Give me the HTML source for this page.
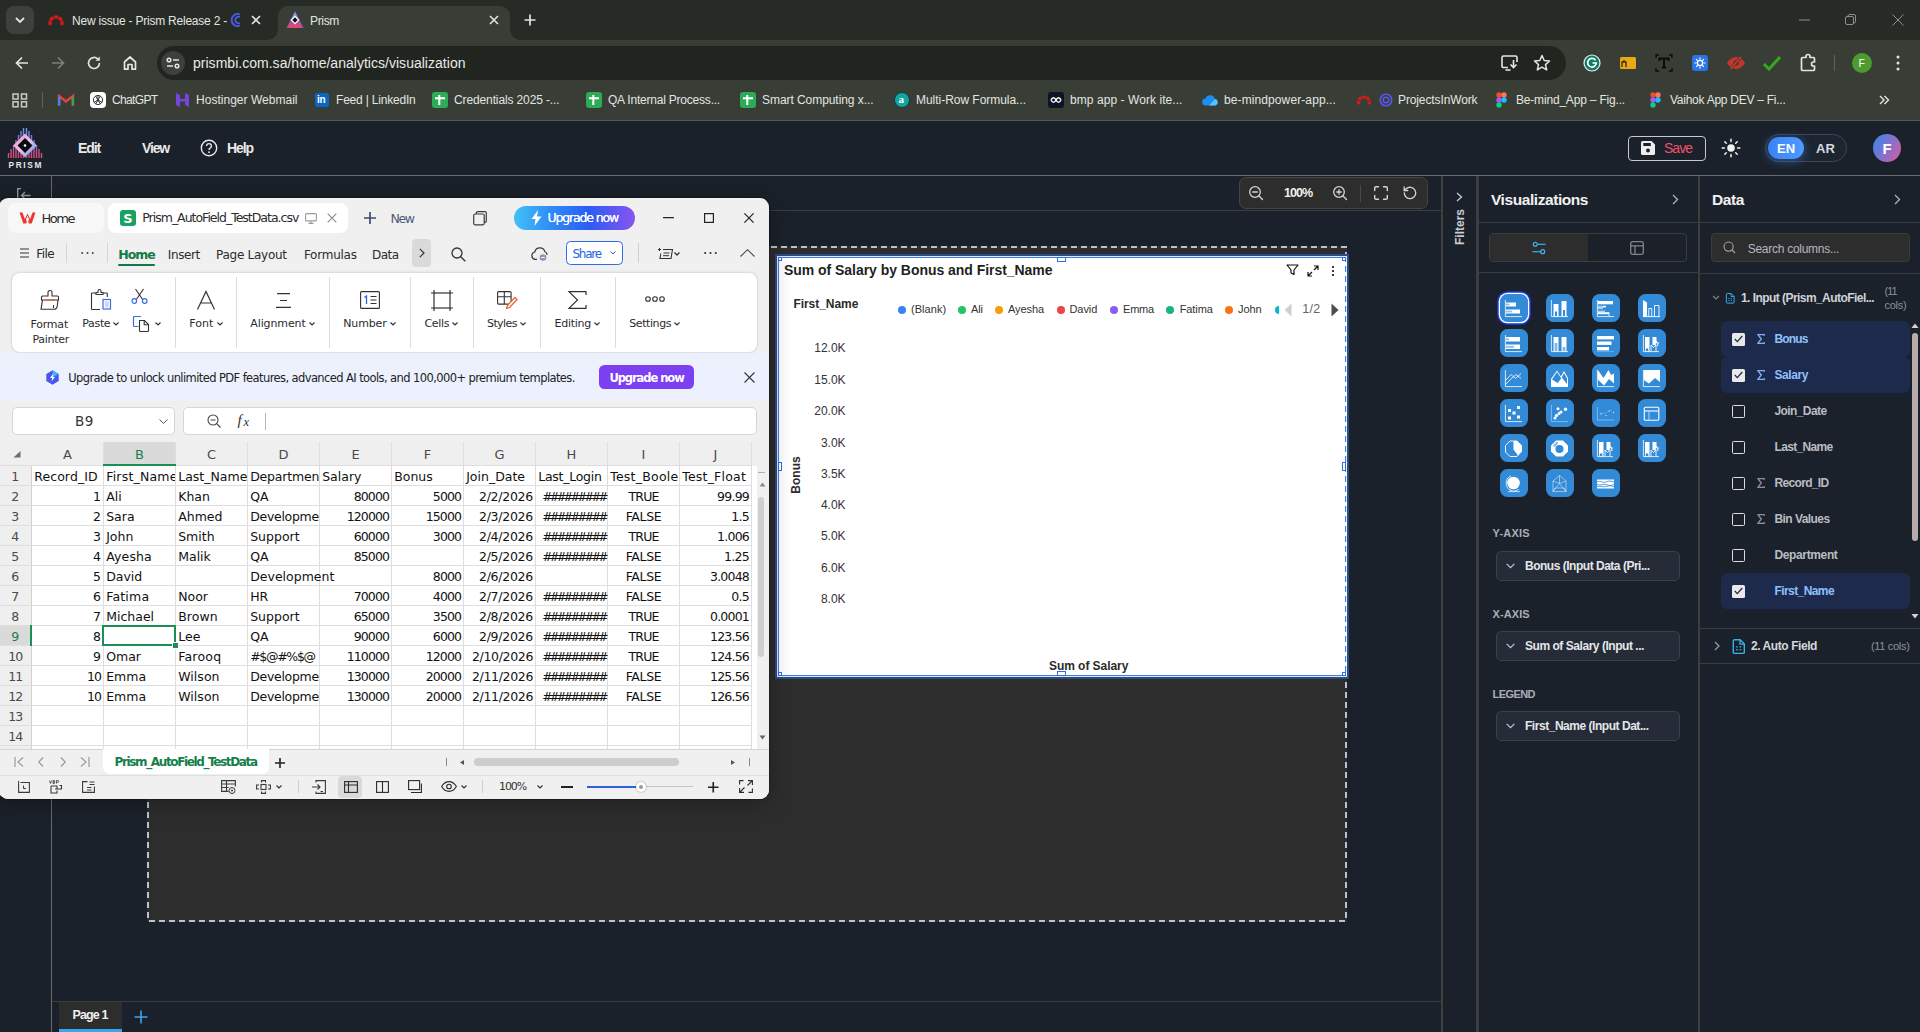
<!DOCTYPE html>
<html lang="en"><head><meta charset="utf-8"><title>Prism</title>
<style>
*{box-sizing:border-box;margin:0;padding:0}
html,body{width:1920px;height:1032px;overflow:hidden}
body{position:relative;background:#1b212a;font-family:"Liberation Sans",sans-serif;color:#e6e6e6;font-size:13px}
.abs{position:absolute}
svg{display:block;position:absolute;overflow:visible}
.t{position:absolute;white-space:nowrap;line-height:1}
/* chrome */
#tabstrip{left:0;top:0;width:1920px;height:40px;background:#272b25}
#toolbar{left:0;top:40px;width:1920px;height:46px;background:#383d36}
#bmbar{left:0;top:86px;width:1920px;height:35px;background:#383d36}
#urlbar{left:157px;top:46px;width:1409px;height:34px;border-radius:17px;background:#21251f}
.ctxt{color:#e3e5e2;font-size:13px}
.bm{color:#e3e5e2;font-size:13px;top:93px}
/* app */
#apphdr{left:0;top:121px;width:1920px;height:55px;background:#1b212a;border-bottom:1px solid #4a4d50}
.menu{color:#e8e8e8;font-weight:bold;font-size:14px;top:141px}
.vline{background:#45474a;width:1px}
.hline{background:#45474a;height:1px}
</style></head><body>

<div class="abs" id="tabstrip"></div>
<div class="abs" id="toolbar"></div>
<div class="abs" id="bmbar"></div>
<div class="abs" style="left:6px;top:6px;width:28px;height:28px;border-radius:8px;background:#3d403d"></div>
<svg style="left:14px;top:16px" width="12" height="8" viewBox="0 0 12 8"><path d="M2 2l4 4 4-4" fill="none" stroke="#e3e5e2" stroke-width="1.8"/></svg>
<svg style="left:47px;top:12px" width="18" height="16" viewBox="0 0 18 16"><path d="M3.360 13.050A6 6 0 1 1 14.640 13.050" fill="none" stroke="#d41a1a" stroke-width="3.400" stroke-dasharray="4 .75"/></svg>
<div class="t" style="left:72.00px;top:15px;font-size:12px;letter-spacing:-0.220px;color:#e3e5e2;">New issue - Prism Release 2 -</div>
<svg style="left:231px;top:13px" width="12" height="14" viewBox="0 0 12 14"><path d="M9 1.5A6 6 0 1 0 9 12.5M9 4A3.3 3.3 0 1 0 9 10" fill="none" stroke="#4a5cf0" stroke-width="1.8"/></svg>
<svg style="left:251px;top:15px" width="10" height="10" viewBox="0 0 10 10"><path d="M1 1l8 8M9 1l-8 8" stroke="#e3e5e2" stroke-width="1.6"/></svg>
<div class="abs" style="left:278px;top:6px;width:232px;height:34px;border-radius:10px 10px 0 0;background:#383d36"></div>
<div class="abs" style="left:268px;top:30px;width:10px;height:10px;background:radial-gradient(circle at 0 0,#272b25 9.5px,#383d36 10px)"></div>
<div class="abs" style="left:510px;top:30px;width:10px;height:10px;background:radial-gradient(circle at 100% 0,#272b25 9.5px,#383d36 10px)"></div>
<svg style="left:286px;top:11px" width="18" height="18" viewBox="0 0 18 18"><path d="M9 0L17.5 17H.5z" fill="#8e5aa8"/><path d="M9 1L13 9H5z" fill="#6fa3e8"/><path d="M2 17h14l-2-5H4z" fill="#d94a78"/><path d="M9 4.5l4.5 4.5L9 13.5 4.500 9z" fill="#fff"/><path d="M9 6.300L11.700 9 9 11.700 6.300 9z" fill="#111"/></svg>
<div class="t" style="left:310.00px;top:15px;font-size:12px;letter-spacing:-0.332px;color:#e3e5e2;">Prism</div>
<svg style="left:489px;top:15px" width="10" height="10" viewBox="0 0 10 10"><path d="M1 1l8 8M9 1l-8 8" stroke="#e3e5e2" stroke-width="1.6"/></svg>
<svg style="left:524px;top:14px" width="12" height="12" viewBox="0 0 12 12"><path d="M6 0.500v11M0.500 6h11" stroke="#e3e5e2" stroke-width="1.7"/></svg>
<svg style="left:1799px;top:19px" width="12" height="2" viewBox="0 0 12 2"><path d="M0 1h11" stroke="#8d908c" stroke-width="1"/></svg>
<svg style="left:1845px;top:14px" width="12" height="12" viewBox="0 0 12 12"><rect x=".5" y="2.500" width="8" height="8" rx="1.500" fill="none" stroke="#8d908c"/><path d="M3 2.500V2a1.500 1.500 0 0 1 1.500-1.500H9A1.500 1.500 0 0 1 10.500 2v5.500a1.500 1.500 0 0 1-1.500 1.500" fill="none" stroke="#8d908c"/></svg>
<svg style="left:1892px;top:14px" width="12" height="12" viewBox="0 0 12 12"><path d="M.5.5l11 11M11.500.5l-11 11" stroke="#8d908c" stroke-width="1"/></svg>
<svg style="left:14px;top:55px" width="16" height="16" viewBox="0 0 16 16"><path d="M14 8H2.500M8 2.500L2.500 8 8 13.500" fill="none" stroke="#e3e5e2" stroke-width="1.7"/></svg>
<svg style="left:50px;top:55px" width="16" height="16" viewBox="0 0 16 16"><path d="M2 8h11.500M8 2.500L13.500 8 8 13.500" fill="none" stroke="#7b7f7a" stroke-width="1.7"/></svg>
<svg style="left:86px;top:55px" width="16" height="16" viewBox="0 0 16 16"><path d="M13.500 8A5.500 5.500 0 1 1 11.800 4" fill="none" stroke="#e3e5e2" stroke-width="1.7"/><path d="M13.800 1.500v4.300H9.500z" fill="#e3e5e2"/></svg>
<svg style="left:122px;top:55px" width="16" height="16" viewBox="0 0 16 16"><path d="M2.500 7L8 2l5.500 5v7.200H10V9.500H6v4.700H2.500z" fill="none" stroke="#e3e5e2" stroke-width="1.7" stroke-linejoin="round"/></svg>
<div class="abs" id="urlbar"></div>
<div class="abs" style="left:161px;top:51px;width:24px;height:24px;border-radius:12px;background:#3d413c"></div>
<svg style="left:166px;top:57px" width="14" height="12" viewBox="0 0 14 12"><circle cx="3" cy="3" r="1.800" fill="none" stroke="#e3e5e2" stroke-width="1.500"/><path d="M7 3h6" stroke="#e3e5e2" stroke-width="1.500"/><circle cx="11" cy="9" r="1.800" fill="none" stroke="#e3e5e2" stroke-width="1.500"/><path d="M1 9h6" stroke="#e3e5e2" stroke-width="1.500"/></svg>
<div class="t" style="left:193.00px;top:56px;font-size:14px;letter-spacing:0.022px;color:#e8eae7;">prismbi.com.sa/home/analytics/visualization</div>
<svg style="left:1501px;top:55px" width="18" height="16" viewBox="0 0 18 16"><path d="M7 12.500H2.500a1.500 1.500 0 0 1-1.500-1.500V2.500A1.500 1.500 0 0 1 2.500 1h12A1.500 1.500 0 0 1 16 2.500V7" fill="none" stroke="#e3e5e2" stroke-width="1.600"/><path d="M4.500 15h5" stroke="#e3e5e2" stroke-width="1.600"/><path d="M12.500 5v7M9.500 9.500l3 3 3-3" fill="none" stroke="#e3e5e2" stroke-width="1.600"/></svg>
<svg style="left:1533px;top:54px" width="18" height="17" viewBox="0 0 18 17"><path d="M9 1.500l2.200 5 5.300.5-4 3.600 1.200 5.300L9 13.100l-4.700 2.800 1.200-5.300-4-3.600 5.300-.5z" fill="none" stroke="#e3e5e2" stroke-width="1.500" stroke-linejoin="round"/></svg>
<svg style="left:1582px;top:53px" width="20" height="20" viewBox="0 0 20 20"><circle cx="10" cy="10" r="8" fill="#0f7d66" stroke="#e9efec" stroke-width="1.200"/><path d="M13.500 7.200A4.300 4.300 0 1 0 14.300 10H10.500" fill="none" stroke="#fff" stroke-width="1.700"/></svg>
<svg style="left:1619px;top:56px" width="18" height="14" viewBox="0 0 18 14"><rect x="1" y="1" width="16" height="12" rx="1.500" fill="#e8a914"/><path d="M3 11V6h4v5M5 6V4" stroke="#3b2c00" stroke-width="1.300" fill="none"/></svg>
<svg style="left:1655px;top:54px" width="18" height="18" viewBox="0 0 18 18"><path d="M4 1H1v3M1 14v3h3M14 1h3v3M17 14v3h-3" fill="none" stroke="#0b0b0b" stroke-width="1.300"/><path d="M4.500 7V4.500h9V7M9 4.500v9M7 13.500h4" fill="none" stroke="#0b0b0b" stroke-width="2"/></svg>
<div class="abs" style="left:1692px;top:55px;width:16px;height:16px;border-radius:3px;background:#2a73e8"></div>
<svg style="left:1694px;top:57px" width="12" height="12" viewBox="0 0 12 12"><circle cx="6" cy="6" r="2.600" fill="none" stroke="#fff" stroke-width="1.400"/><path d="M6 .5v2M6 9.500v2M.5 6h2M9.500 6h2M2.100 2.100l1.400 1.400M8.500 8.500l1.400 1.400M2.100 9.900l1.400-1.400M8.500 3.500l1.400-1.400" stroke="#fff" stroke-width="1.200"/></svg>
<svg style="left:1726px;top:56px" width="20" height="14" viewBox="0 0 20 14"><path d="M1 7c3-5 7-6 9-6s6 1 9 6c-3 5-7 6-9 6s-6-1-9-6z" fill="#c8342a"/><circle cx="10" cy="7" r="2.600" fill="#383d36"/><path d="M4 13.500L15.500 .5" stroke="#383d36" stroke-width="3"/><path d="M4.500 13L15 1" stroke="#d83a2e" stroke-width="1.500"/></svg>
<svg style="left:1762px;top:54px" width="20" height="18" viewBox="0 0 20 18"><path d="M2 10l5 5L18 3" fill="none" stroke="#35a81c" stroke-width="3"/></svg>
<svg style="left:1799px;top:53px" width="19" height="19" viewBox="0 0 19 19"><path d="M7 3.500a2 2 0 0 1 4 0V4.500h3.500a1 1 0 0 1 1 1V9h-1a2 2 0 0 0 0 4h1v3.500a1 1 0 0 1-1 1H3.500a1 1 0 0 1-1-1V5.500a1 1 0 0 1 1-1H7z" fill="none" stroke="#e3e5e2" stroke-width="1.700" stroke-linejoin="round"/></svg>
<div class="abs" style="left:1834px;top:55px;width:1px;height:16px;background:#5d615c"></div>
<div class="abs" style="left:1852px;top:53px;width:20px;height:20px;border-radius:10px;background:#4f9a2c"></div>
<div class="t" style="left:1858.500px;top:58px;font-size:10.500px;color:#fff">F</div>
<svg style="left:1896px;top:55px" width="4" height="16" viewBox="0 0 4 16"><circle cx="2" cy="2" r="1.500" fill="#e3e5e2"/><circle cx="2" cy="8" r="1.500" fill="#e3e5e2"/><circle cx="2" cy="14" r="1.500" fill="#e3e5e2"/></svg>
<svg style="left:12px;top:93px" width="16" height="15" viewBox="0 0 16 15"><g fill="none" stroke="#c9ccc8" stroke-width="1.500"><rect x="1" y="1" width="5" height="5"/><rect x="9.500" y="1" width="5" height="5"/><rect x="1" y="8.800" width="5" height="5"/><rect x="9.500" y="8.800" width="5" height="5"/></g></svg>
<div class="abs" style="left:42px;top:92px;width:1px;height:16px;background:#5d615c"></div>
<svg style="left:58px;top:94px" width="16" height="12" viewBox="0 0 16 12"><path d="M1 11.500V2l7 5.500L15 2v9.500" fill="none" stroke="#ea4335" stroke-width="2.400"/><path d="M1.200 11.500V3" stroke="#4285f4" stroke-width="2.400"/><path d="M14.800 11.500V3" stroke="#34a853" stroke-width="2.400"/></svg>
<div class="abs" style="left:90px;top:92px;width:16px;height:16px;border-radius:4px;background:#fff"></div>
<svg style="left:92px;top:94px" width="12" height="12" viewBox="0 0 12 12"><g fill="none" stroke="#222" stroke-width=".9"><circle cx="6" cy="6" r="4.600"/><path d="M6 1.400v4.600l4 2.300M6 6L2 8.300M3.700 2l4.600 8M8.300 2L3.700 10"/></g></svg>
<div class="t" style="left:112.00px;top:94px;font-size:12px;letter-spacing:-0.645px;color:#e3e5e2;">ChatGPT</div>
<svg style="left:175px;top:92px" width="15" height="16" viewBox="0 0 15 16"><path d="M1 1l4 2v4h5V1l4 2v12l-4-2V9.500H5V15l-4-2z" fill="#7346e0"/><path d="M5 7h5v2.500H5z" fill="#272b25" opacity=".0"/></svg>
<div class="t" style="left:196.00px;top:94px;font-size:12px;letter-spacing:0.021px;color:#e3e5e2;">Hostinger Webmail</div>
<div class="abs" style="left:315px;top:93px;width:14px;height:14px;border-radius:2px;background:#0a66c2"></div>
<div class="t" style="left:317px;top:95px;font-size:10px;font-weight:bold;color:#fff;letter-spacing:-.3px">in</div>
<div class="t" style="left:336.00px;top:94px;font-size:12px;letter-spacing:-0.200px;color:#e3e5e2;">Feed | LinkedIn</div>
<div class="abs" style="left:432px;top:92px;width:16px;height:16px;border-radius:3px;background:#2eab58"></div>
<svg style="left:432px;top:92px" width="16" height="16" viewBox="0 0 16 16"><path d="M3 6.200h10M7.300 3v10" stroke="#fff" stroke-width="2"/></svg>
<div class="t" style="left:454.00px;top:94px;font-size:12px;letter-spacing:-0.122px;color:#e3e5e2;">Credentials 2025 -...</div>
<div class="abs" style="left:586px;top:92px;width:16px;height:16px;border-radius:3px;background:#2eab58"></div>
<svg style="left:586px;top:92px" width="16" height="16" viewBox="0 0 16 16"><path d="M3 6.200h10M7.300 3v10" stroke="#fff" stroke-width="2"/></svg>
<div class="t" style="left:608.00px;top:94px;font-size:12px;letter-spacing:-0.215px;color:#e3e5e2;">QA Internal Process...</div>
<div class="abs" style="left:740px;top:92px;width:16px;height:16px;border-radius:3px;background:#2eab58"></div>
<svg style="left:740px;top:92px" width="16" height="16" viewBox="0 0 16 16"><path d="M3 6.200h10M7.300 3v10" stroke="#fff" stroke-width="2"/></svg>
<div class="t" style="left:762.00px;top:94px;font-size:12px;letter-spacing:-0.060px;color:#e3e5e2;">Smart Computing x...</div>
<div class="abs" style="left:894px;top:92px;width:16px;height:16px;border-radius:8px;background:#12a5a0;border:1.500px solid #0d3e45"></div>
<div class="t" style="left:898.500px;top:94px;font-size:11px;font-weight:bold;color:#fff;font-family:'Liberation Serif',serif">a</div>
<div class="t" style="left:916.00px;top:94px;font-size:12px;letter-spacing:-0.034px;color:#e3e5e2;">Multi-Row Formula...</div>
<div class="abs" style="left:1048px;top:92px;width:16px;height:16px;border-radius:3px;background:#0d1424"></div>
<svg style="left:1050px;top:96px" width="12" height="8" viewBox="0 0 12 8"><path d="M1 4c1.500-3 3.500-3 5 0s3.500 3 5 0M1 4c1.500 3 3.500 3 5 0s3.500-3 5 0" fill="none" stroke="#fff" stroke-width="1.500"/></svg>
<div class="t" style="left:1070.00px;top:94px;font-size:12px;letter-spacing:0.064px;color:#e3e5e2;">bmp app - Work ite...</div>
<svg style="left:1202px;top:94px" width="17" height="12" viewBox="0 0 17 12"><path d="M4 11.500a3.500 3.500 0 0 1-.5-7A5 5 0 0 1 13 5a3.300 3.300 0 0 1 .3 6.500z" fill="#1e8df2"/><path d="M7 11.500l6-6.400a3.300 3.300 0 0 1 .3 6.400z" fill="#56c3fb"/></svg>
<div class="t" style="left:1224.00px;top:94px;font-size:12px;letter-spacing:0.102px;color:#e3e5e2;">be-mindpower-app...</div>
<svg style="left:1355px;top:93px" width="18" height="14" viewBox="0 0 18 14"><path d="M3.830 11.400A5.500 5.500 0 1 1 14.170 11.400" fill="none" stroke="#d41a1a" stroke-width="3.200" stroke-dasharray="3.700 .7"/></svg>
<svg style="left:1379px;top:93px" width="14" height="14" viewBox="0 0 14 14"><circle cx="7" cy="7" r="5.800" fill="none" stroke="#5a55f0" stroke-width="1.600"/><circle cx="7" cy="7" r="2.800" fill="none" stroke="#5a55f0" stroke-width="1.600"/></svg>
<div class="t" style="left:1398.00px;top:94px;font-size:12px;letter-spacing:-0.117px;color:#e3e5e2;">ProjectsInWork</div>
<svg style="left:1496px;top:92px" width="11" height="16" viewBox="0 0 11 16"><circle cx="3" cy="3" r="2.700" fill="#f24e1e"/><circle cx="8" cy="3" r="2.700" fill="#ff7262"/><circle cx="3" cy="8" r="2.700" fill="#a259ff"/><circle cx="8" cy="8" r="2.700" fill="#1abcfe"/><circle cx="3" cy="13" r="2.700" fill="#0acf83"/></svg>
<div class="t" style="left:1516.00px;top:94px;font-size:12px;letter-spacing:-0.186px;color:#e3e5e2;">Be-mind_App – Fig...</div>
<svg style="left:1650px;top:92px" width="11" height="16" viewBox="0 0 11 16"><circle cx="3" cy="3" r="2.700" fill="#f24e1e"/><circle cx="8" cy="3" r="2.700" fill="#ff7262"/><circle cx="3" cy="8" r="2.700" fill="#a259ff"/><circle cx="8" cy="8" r="2.700" fill="#1abcfe"/><circle cx="3" cy="13" r="2.700" fill="#0acf83"/></svg>
<div class="t" style="left:1670.00px;top:94px;font-size:12px;letter-spacing:-0.258px;color:#e3e5e2;">Vaihok App DEV – Fi...</div>
<svg style="left:1879px;top:95px" width="10" height="10" viewBox="0 0 10 10"><path d="M1 1l4 4-4 4M5.500 1l4 4-4 4" fill="none" stroke="#e3e5e2" stroke-width="1.400"/></svg>
<div class="abs" style="left:0px;top:120px;width:1920px;height:1px;background:#555853;"></div>
<div class="abs" style="left:0px;top:121px;width:1920px;height:54px;background:#1b212a;"></div>
<div class="abs" style="left:0px;top:175px;width:1920px;height:1px;background:#666a70;"></div>
<svg style="left:7px;top:127px" width="36" height="41" viewBox="0 0 36 41">
<defs><linearGradient id="lg1" x1="0" y1="0" x2="0" y2="1"><stop offset="0" stop-color="#5aa0f0"/><stop offset=".55" stop-color="#9a5fc0"/><stop offset="1" stop-color="#e8486e"/></linearGradient>
<linearGradient id="lg2" x1="0" y1="0" x2="1" y2="1"><stop offset="0" stop-color="#f08ab0"/><stop offset=".5" stop-color="#e8c8e8"/><stop offset="1" stop-color="#3f8ef0"/></linearGradient></defs>
<g stroke="url(#lg1)" stroke-width="1.400">
<path d="M1.500 31V26M4 31V22M6.500 31V18M9 31V13M11.500 31V8M14 31V4M16.500 31V1M19.500 31V1M22 31V4M24.500 31V8M27 31V13M29.500 31V18M32 31V22M34.500 31V26"/></g>
<path d="M18 6.500L30 18.500 18 30.500 6 18.500z" fill="url(#lg2)"/>
<path d="M18 11L25.500 18.500 18 26 10.500 18.500z" fill="#0a0a0f"/><circle cx="18" cy="18.500" r="1.300" fill="#fff"/>
<text x="18.800" y="40.600" font-family="Liberation Sans, sans-serif" font-size="8.300" font-weight="bold" fill="#e8e8e8" text-anchor="middle" letter-spacing="1.700">PRISM</text></svg>
<div class="t" style="left:78.00px;top:141px;font-size:14px;letter-spacing:-1.110px;color:#e9e9e9;font-weight:bold;">Edit</div>
<div class="t" style="left:142.00px;top:141px;font-size:14px;letter-spacing:-1.163px;color:#e9e9e9;font-weight:bold;">View</div>
<svg style="left:200px;top:139px" width="18" height="18" viewBox="0 0 18 18"><circle cx="9" cy="9" r="7.700" fill="none" stroke="#e9e9e9" stroke-width="1.400"/><path d="M6.600 7a2.400 2.400 0 1 1 3.600 2.100c-.8.500-1.200.9-1.200 1.900" fill="none" stroke="#e9e9e9" stroke-width="1.400"/><circle cx="9" cy="13.200" r=".9" fill="#e9e9e9"/></svg>
<div class="t" style="left:227.00px;top:141px;font-size:14px;letter-spacing:-1.085px;color:#e9e9e9;font-weight:bold;">Help</div>
<div class="abs" style="left:1628px;top:136px;width:78px;height:25px;background:transparent;border:1px solid #c9c9c9;border-radius:4px"></div>
<svg style="left:1641px;top:141px" width="14" height="14" viewBox="0 0 14 14"><path d="M1.500 0h9L14 3.500v9a1.500 1.500 0 0 1-1.500 1.500h-11A1.500 1.500 0 0 1 0 12.500v-11A1.500 1.500 0 0 1 1.500 0z" fill="#ededed"/><rect x="2.300" y="2" width="7.500" height="3" fill="#1b2029"/><circle cx="7" cy="9.500" r="2" fill="#1b2029"/></svg>
<div class="t" style="left:1664.00px;top:141px;font-size:14px;letter-spacing:-0.978px;color:#f0506e;">Save</div>
<svg style="left:1721px;top:138px" width="20" height="20" viewBox="0 0 20 20"><circle cx="10" cy="10" r="3.800" fill="#f2f2f2"/><g stroke="#f2f2f2" stroke-width="1.500" stroke-linecap="round"><path d="M10 1.200v2.200M10 16.600v2.200M1.200 10h2.200M16.600 10h2.200M3.800 3.800l1.500 1.500M14.700 14.700l1.500 1.500M3.800 16.200l1.500-1.500M14.700 5.300l1.500-1.500"/></g></svg>
<div class="abs" style="left:1765px;top:134px;width:82px;height:28px;background:#1d2530;border:1px solid #3b4656;border-radius:14px"></div>
<div class="abs" style="left:1768px;top:137px;width:36px;height:22px;background:linear-gradient(90deg,#3b82f6,#4f9bff);border-radius:11px;box-shadow:0 2px 10px 1px rgba(59,130,246,.45)"></div>
<div class="t" style="left:1777.00px;top:142px;font-size:13px;letter-spacing:-0.030px;color:#ffffff;font-weight:bold;">EN</div>
<div class="t" style="left:1816.00px;top:142px;font-size:13px;letter-spacing:0.112px;color:#d5d9e0;font-weight:bold;">AR</div>
<div class="abs" style="left:1873px;top:134px;width:28px;height:28px;background:linear-gradient(120deg,#3f86e8 10%,#8a6fc8 55%,#e05a9a 100%);border-radius:14px"></div>
<div class="t" style="left:1882.50px;top:141px;font-size:15px;color:#fff;font-weight:bold;">F</div>
<div class="abs" style="left:51px;top:176px;width:1px;height:856px;background:#676b72;"></div>
<svg style="left:17px;top:188px" width="14" height="12" viewBox="0 0 14 12"><path d="M4 .7H.7V12M13.500 7.500H4.500M8 4L4.500 7.500 8 11" fill="none" stroke="#9aa0a8" stroke-width="1.300"/></svg>
<div class="abs" style="left:53px;top:210px;width:1388px;height:1px;background:#3d3d3d;"></div>
<div class="abs" style="left:1239px;top:177px;width:189px;height:32px;background:#2d2d2d;border:1px solid #454545;border-radius:7px"></div>
<svg style="left:1248px;top:185px" width="16" height="16" viewBox="0 0 16 16"><circle cx="7" cy="7" r="5.300" fill="none" stroke="#d6d6d6" stroke-width="1.300"/><path d="M11 11l3.500 3.500M4.700 7h4.600" stroke="#d6d6d6" stroke-width="1.300" stroke-linecap="round"/></svg>
<div class="t" style="left:1284.00px;top:187px;font-size:12.5px;letter-spacing:-0.993px;color:#f0f0f0;font-weight:bold;">100%</div>
<svg style="left:1332px;top:185px" width="16" height="16" viewBox="0 0 16 16"><circle cx="7" cy="7" r="5.300" fill="none" stroke="#d6d6d6" stroke-width="1.300"/><path d="M11 11l3.500 3.500M4.700 7h4.600M7 4.700v4.600" stroke="#d6d6d6" stroke-width="1.300" stroke-linecap="round"/></svg>
<div class="abs" style="left:1360px;top:185px;width:1px;height:17px;background:#4a4a4a;"></div>
<svg style="left:1374px;top:186px" width="14" height="14" viewBox="0 0 14 14"><path d="M.7 4.500V2A1.300 1.300 0 0 1 2 .7h2.500M9.500.7H12A1.300 1.300 0 0 1 13.300 2v2.500M13.300 9.500V12a1.300 1.300 0 0 1-1.300 1.300H9.500M4.500 13.300H2A1.300 1.300 0 0 1 .7 12V9.500" fill="none" stroke="#d6d6d6" stroke-width="1.400" stroke-linecap="round"/></svg>
<svg style="left:1403px;top:186px" width="14" height="14" viewBox="0 0 14 14"><path d="M1.300 7A5.700 5.700 0 1 0 3.200 2.700L1.200 4.500" fill="none" stroke="#d6d6d6" stroke-width="1.300" stroke-linecap="round"/><path d="M1.200 1v3.500h3.500" fill="none" stroke="#d6d6d6" stroke-width="1.300" stroke-linecap="round" stroke-linejoin="round"/></svg>
<div class="abs" style="left:147px;top:246px;width:1200px;height:676px;background:#2d2d2d"></div>
<svg style="left:147px;top:246px" width="1200" height="676" viewBox="0 0 1200 676"><rect x="1" y="1" width="1198" height="674" fill="none" stroke="#bcc2cc" stroke-width="2" stroke-dasharray="6 4" stroke-dashoffset="-3"/></svg>
<div class="abs" style="left:52px;top:1001px;width:1389px;height:1px;background:#3d3d3d;"></div>
<div class="abs" style="left:59px;top:1002px;width:63px;height:30px;background:#2d2d2d;"></div>
<div class="abs" style="left:59px;top:1029px;width:63px;height:3px;background:#38a5ec;"></div>
<div class="t" style="left:72.50px;top:1009px;font-size:12.5px;letter-spacing:-0.884px;color:#f0f0f0;font-weight:bold;">Page 1</div>
<svg style="left:134px;top:1010px" width="14" height="14" viewBox="0 0 14 14"><path d="M7 .5v13M.5 7h13" stroke="#3fa2e8" stroke-width="1.600"/></svg>
<div class="abs" style="left:778px;top:257px;width:568px;height:419px;background:#fff;border:1px solid #3b7bea;box-shadow:0 0 0 1px #dfe8f7,0 0 0 3px #2b4b87"></div>
<svg style="left:1345px;top:257px" width="2" height="418" viewBox="0 0 2 418"><path d="M1 0v418" stroke="#fff" stroke-width="2" stroke-dasharray="4 6" stroke-dashoffset="-5"/></svg>
<div class="abs" style="left:1057px;top:257px;width:9px;height:5px;background:#fff;border:1px solid #2f6fe0"></div>
<div class="abs" style="left:1057px;top:671px;width:9px;height:5px;background:#fff;border:1px solid #2f6fe0"></div>
<div class="abs" style="left:778px;top:462px;width:4px;height:9px;background:#fff;border:1px solid #2f6fe0"></div>
<div class="abs" style="left:1342px;top:462px;width:4px;height:9px;background:#fff;border:1px solid #2f6fe0"></div>
<div class="abs" style="left:778px;top:257px;width:4px;height:4px;background:#fff;border:1px solid #2f6fe0"></div>
<div class="abs" style="left:1342px;top:257px;width:4px;height:4px;background:#fff;border:1px solid #2f6fe0"></div>
<div class="abs" style="left:778px;top:672px;width:4px;height:4px;background:#fff;border:1px solid #2f6fe0"></div>
<div class="abs" style="left:1342px;top:672px;width:4px;height:4px;background:#fff;border:1px solid #2f6fe0"></div>
<div class="t" style="left:784.00px;top:263px;font-size:14px;letter-spacing:-0.039px;color:#1f1f1f;font-weight:bold;">Sum of Salary by Bonus and First_Name</div>
<svg style="left:1286px;top:264px" width="13" height="12" viewBox="0 0 13 12"><path d="M1 1h11L8 6v4.500L5 9V6z" fill="none" stroke="#111" stroke-width="1.200" stroke-linejoin="round"/></svg>
<svg style="left:1307px;top:265px" width="12" height="12" viewBox="0 0 12 12"><path d="M7 1h4v4M11 1L7 5M5 11H1V7M1 11l4-4" fill="none" stroke="#111" stroke-width="1.200"/></svg>
<svg style="left:1331px;top:265px" width="4" height="12" viewBox="0 0 4 12"><circle cx="2" cy="2" r="1.100" fill="#111"/><circle cx="2" cy="6" r="1.100" fill="#111"/><circle cx="2" cy="10" r="1.100" fill="#111"/></svg>
<div class="t" style="left:793.40px;top:298px;font-size:12px;letter-spacing:-0.036px;color:#2b2b2b;font-weight:bold;">First_Name</div>
<div class="abs" style="left:898px;top:305.5px;width:8px;height:8px;border-radius:4px;background:#3b82f6"></div>
<div class="t" style="left:911.00px;top:304px;font-size:11px;letter-spacing:0.051px;color:#333;">(Blank)</div>
<div class="abs" style="left:958px;top:305.5px;width:8px;height:8px;border-radius:4px;background:#22c55e"></div>
<div class="t" style="left:971.00px;top:304px;font-size:11px;letter-spacing:-0.142px;color:#333;">Ali</div>
<div class="abs" style="left:995px;top:305.5px;width:8px;height:8px;border-radius:4px;background:#f59e0b"></div>
<div class="t" style="left:1008.00px;top:304px;font-size:11px;letter-spacing:-0.082px;color:#333;">Ayesha</div>
<div class="abs" style="left:1056.5px;top:305.5px;width:8px;height:8px;border-radius:4px;background:#ef4444"></div>
<div class="t" style="left:1069.50px;top:304px;font-size:11px;letter-spacing:-0.085px;color:#333;">David</div>
<div class="abs" style="left:1109.7px;top:305.5px;width:8px;height:8px;border-radius:4px;background:#8b5cf6"></div>
<div class="t" style="left:1123.00px;top:304px;font-size:11px;letter-spacing:-0.195px;color:#333;">Emma</div>
<div class="abs" style="left:1166.3px;top:305.5px;width:8px;height:8px;border-radius:4px;background:#10b981"></div>
<div class="t" style="left:1179.70px;top:304px;font-size:11px;letter-spacing:-0.086px;color:#333;">Fatima</div>
<div class="abs" style="left:1225px;top:305.5px;width:8px;height:8px;border-radius:4px;background:#f97316"></div>
<div class="t" style="left:1238.00px;top:304px;font-size:11px;letter-spacing:-0.038px;color:#333;">John</div>
<div class="abs" style="left:1275px;top:305.5px;width:4px;height:8px;border-radius:4px 0 0 4px;background:#06b6d4"></div>
<svg style="left:1284px;top:303px" width="8" height="14" viewBox="0 0 8 14"><path d="M7.500 .5v13L.5 7z" fill="#d0d0d0"/></svg>
<div class="t" style="left:1302.30px;top:303px;font-size:12.5px;letter-spacing:0.208px;color:#666;">1/2</div>
<svg style="left:1331px;top:303px" width="8" height="14" viewBox="0 0 8 14"><path d="M.5 .5v13L7.500 7z" fill="#4d4d4d"/></svg>
<div class="t" style="left:814.24px;top:342.3px;font-size:12px;color:#333;">12.0K</div>
<div class="t" style="left:814.24px;top:373.6px;font-size:12px;color:#333;">15.0K</div>
<div class="t" style="left:814.24px;top:404.8px;font-size:12px;color:#333;">20.0K</div>
<div class="t" style="left:820.91px;top:436.8px;font-size:12px;color:#333;">3.0K</div>
<div class="t" style="left:820.91px;top:468.0px;font-size:12px;color:#333;">3.5K</div>
<div class="t" style="left:820.91px;top:499.0px;font-size:12px;color:#333;">4.0K</div>
<div class="t" style="left:820.91px;top:530.1999999999999px;font-size:12px;color:#333;">5.0K</div>
<div class="t" style="left:820.91px;top:561.8px;font-size:12px;color:#333;">6.0K</div>
<div class="t" style="left:820.91px;top:593.0999999999999px;font-size:12px;color:#333;">8.0K</div>
<div class="t" style="left:758px;top:468.500px;width:76px;text-align:center;font-size:12px;font-weight:bold;color:#2b2b2b;transform:rotate(-90deg)">Bonus</div>
<div class="t" style="left:1049.00px;top:660px;font-size:12px;letter-spacing:-0.056px;color:#2b2b2b;font-weight:bold;">Sum of Salary</div>
<div class="abs" style="left:1441px;top:176px;width:2px;height:856px;background:#404040;"></div>
<div class="abs" style="left:1476px;top:176px;width:3px;height:856px;background:#3e3e3e;"></div>
<div class="abs" style="left:1698px;top:176px;width:2px;height:856px;background:#3d3d3d;"></div>
<svg style="left:1456px;top:192px" width="7" height="10" viewBox="0 0 7 10"><path d="M1 1l4.500 4L1 9" fill="none" stroke="#c9ccd2" stroke-width="1.300"/></svg>
<div class="t" style="left:1430px;top:221px;width:60px;text-align:center;font-size:12px;font-weight:bold;color:#c9ccd2;transform:rotate(-90deg)">Filters</div>
<div class="t" style="left:1491.00px;top:192px;font-size:15.5px;letter-spacing:-0.434px;color:#f2f2f2;font-weight:bold;">Visualizations</div>
<svg style="left:1672px;top:194px" width="7" height="11" viewBox="0 0 7 11"><path d="M1 1l4.500 4.500L1 10" fill="none" stroke="#aeb3bb" stroke-width="1.300"/></svg>
<div class="abs" style="left:1479px;top:222px;width:219px;height:1px;background:#3d3d3d;"></div>
<div class="abs" style="left:1489px;top:233px;width:198px;height:29px;background:#1b2029;border:1px solid #3a3d42;border-radius:4px;overflow:hidden"></div>
<div class="abs" style="left:1490px;top:234px;width:98px;height:27px;background:#2d2d2d;border-radius:3px 0 0 3px"></div>
<svg style="left:1532px;top:241px" width="14" height="14" viewBox="0 0 14 14"><g fill="none" stroke="#3db4f2" stroke-width="1.200"><circle cx="3.300" cy="3.300" r="2"/><path d="M5.500 3.300h8"/><circle cx="10.700" cy="10.700" r="2"/><path d="M.5 10.700h8"/></g></svg>
<svg style="left:1630px;top:241px" width="14" height="14" viewBox="0 0 14 14"><g fill="none" stroke="#80858d" stroke-width="1.300"><rect x=".7" y=".7" width="12.600" height="12.600" rx="1.800"/><path d="M.7 4.800h12.600M5 4.800v8.500"/></g></svg>
<div class="abs" style="left:1479px;top:272px;width:219px;height:1px;background:#3d3d3d;"></div>
<div class="abs" style="left:1500px;top:294px;width:28px;height:28px;border-radius:7.500px;background:#338ad6;box-shadow:0 0 0 1.300px #fff,0 0 0 2.800px #1f3be0"></div>
<svg style="left:1505.3px;top:299.5px" width="17" height="17" viewBox="0 0 17 17"><path d="M.4 0v16.600H17" fill="none" stroke="#fff" stroke-width=".8"/><rect x="1" y="2.500" width="10" height="4" fill="#fff"/><rect x="1" y="3.600" width="3.500" height="1.800" fill="#8cc0ee"/><rect x="1" y="9.500" width="14" height="4" fill="#fff"/><rect x="1" y="10.600" width="6" height="1.800" fill="#8cc0ee"/></svg>
<div class="abs" style="left:1546px;top:294px;width:28px;height:28px;border-radius:7.500px;background:#338ad6"></div>
<svg style="left:1551.3px;top:299.5px" width="17" height="17" viewBox="0 0 17 17"><path d="M.4 0v16.600H17" fill="none" stroke="#fff" stroke-width=".8"/><rect x="2.500" y="4" width="5" height="12.500" fill="#fff"/><rect x="4" y="11.500" width="2" height="4.500" fill="#338ad6"/><rect x="10.500" y="1" width="5" height="15.500" fill="#fff"/><rect x="12" y="10" width="2" height="6" fill="#338ad6"/></svg>
<div class="abs" style="left:1592px;top:294px;width:28px;height:28px;border-radius:7.500px;background:#338ad6"></div>
<svg style="left:1597.3px;top:299.5px" width="17" height="17" viewBox="0 0 17 17"><path d="M.4 0v16.600H17" fill="none" stroke="#fff" stroke-width=".8"/><rect x="1" y="1" width="15" height="3.300" fill="#fff"/><rect x="1" y="5.800" width="5" height="3.300" fill="#a9d0f2"/><rect x="6" y="5.800" width="3" height="1.600" fill="#fff"/><rect x="1" y="10.600" width="7" height="1.600" fill="#a9d0f2"/><rect x="1" y="12.200" width="11" height="2" fill="#fff"/><path d="M12 12.200v4" stroke="#fff" stroke-width=".8"/></svg>
<div class="abs" style="left:1638px;top:294px;width:28px;height:28px;border-radius:7.500px;background:#338ad6"></div>
<svg style="left:1643.3px;top:299.5px" width="17" height="17" viewBox="0 0 17 17"><path d="M0 0L4 2.500V17H0z" fill="#fff"/><path d="M5.800 17V8.500h3V17M11.500 17V5.500h4.500V17M0 16.600h17" fill="none" stroke="#fff" stroke-width=".9"/></svg>
<div class="abs" style="left:1500px;top:329px;width:28px;height:28px;border-radius:7.500px;background:#338ad6"></div>
<svg style="left:1505.3px;top:334.5px" width="17" height="17" viewBox="0 0 17 17"><path d="M.4 0v16.600H17" fill="none" stroke="#fff" stroke-width=".8"/><rect x="1" y="2" width="14" height="4.500" fill="#fff"/><rect x="1" y="3.300" width="3" height="2" fill="#8cc0ee"/><rect x="1" y="9.500" width="14" height="4.500" fill="#fff"/><rect x="1" y="10.800" width="8" height="2" fill="#8cc0ee"/></svg>
<div class="abs" style="left:1546px;top:329px;width:28px;height:28px;border-radius:7.500px;background:#338ad6"></div>
<svg style="left:1551.3px;top:334.5px" width="17" height="17" viewBox="0 0 17 17"><path d="M.4 0v16.600H17" fill="none" stroke="#fff" stroke-width=".8"/><rect x="2.500" y="2" width="5" height="14.500" fill="#fff"/><rect x="3.600" y="8" width="2.800" height="8" fill="#7db8ec"/><rect x="10.500" y="2" width="5" height="14.500" fill="#fff"/><rect x="11.600" y="12" width="2.800" height="4" fill="#7db8ec"/></svg>
<div class="abs" style="left:1592px;top:329px;width:28px;height:28px;border-radius:7.500px;background:#338ad6"></div>
<svg style="left:1597.3px;top:334.5px" width="17" height="17" viewBox="0 0 17 17"><rect x="0" y="1" width="17" height="3.400" fill="#fff"/><rect x="0" y="6.500" width="14.500" height="3.400" fill="#fff"/><rect x="0" y="12" width="12" height="3.400" fill="#fff"/><path d="M0 16.600h17" stroke="#8cc0ee" stroke-width=".6"/></svg>
<div class="abs" style="left:1638px;top:329px;width:28px;height:28px;border-radius:7.500px;background:#338ad6"></div>
<svg style="left:1643.3px;top:334.5px" width="17" height="17" viewBox="0 0 17 17"><path d="M.4 0v16.600H16" fill="none" stroke="#fff" stroke-width=".8"/><rect x="2" y="2" width="4.500" height="14.500" fill="#fff"/><rect x="2.800" y="13.500" width="2.500" height="2.500" fill="#338ad6"/><rect x="9.500" y="2" width="4" height="8" fill="#fff"/><path d="M8 16.500V10l2.500 2.500L13 9.500v7" fill="none" stroke="#fff" stroke-width=".9"/><path d="M13.500 5.500l1 2 2.200.2-1.700 1.400.6 2.100-2.100-1.200-1.800 1.200.5-2.100-1.500-1.500 2-.2z" fill="#fff"/><path d="M13.500 7.800l.4.800.9.100-.7.600.2.900-.8-.5-.8.500.2-.9-.6-.6.800-.1z" fill="#338ad6"/></svg>
<div class="abs" style="left:1500px;top:364px;width:28px;height:28px;border-radius:7.500px;background:#338ad6"></div>
<svg style="left:1505.3px;top:369.5px" width="17" height="17" viewBox="0 0 17 17"><path d="M.4 0v16.600H17" fill="none" stroke="#fff" stroke-width=".8"/><path d="M.5 10.500L6 4.500l4.500 4L16 3.500M.5 14.500L7 8l4-3.500 5 4" fill="none" stroke="#fff" stroke-width=".8"/></svg>
<div class="abs" style="left:1546px;top:364px;width:28px;height:28px;border-radius:7.500px;background:#338ad6"></div>
<svg style="left:1551.3px;top:369.5px" width="17" height="17" viewBox="0 0 17 17"><path d="M0 17V9L6 .5l4 6 3-5.500 4 7V17z" fill="#fff"/><path d="M1 9.500L6 2l4.300 6.500L6.500 13zM10.800 7.500L13 3l3 5.500v5.500z" fill="#338ad6"/></svg>
<div class="abs" style="left:1592px;top:364px;width:28px;height:28px;border-radius:7.500px;background:#338ad6"></div>
<svg style="left:1597.3px;top:369.5px" width="17" height="17" viewBox="0 0 17 17"><path d="M.4 0v16.600H17" fill="none" stroke="#fff" stroke-width=".8"/><path d="M.8 0L6.500 8 11.500 0 14 5 17 3.500V13.500L12 9 7 15.500 .8 9.500z" fill="#fff"/></svg>
<div class="abs" style="left:1638px;top:364px;width:28px;height:28px;border-radius:7.500px;background:#338ad6"></div>
<svg style="left:1643.3px;top:369.5px" width="17" height="17" viewBox="0 0 17 17"><path d="M.4 0v16.600H17" fill="none" stroke="#fff" stroke-width=".8"/><path d="M.8 0H17v12l-5-4-6 5.500L.8 10z" fill="#fff"/></svg>
<div class="abs" style="left:1500px;top:399px;width:28px;height:28px;border-radius:7.500px;background:#338ad6"></div>
<svg style="left:1505.3px;top:404.5px" width="17" height="17" viewBox="0 0 17 17"><path d="M.4 0v16.600H17" fill="none" stroke="#fff" stroke-width=".8"/><rect x="3" y="4" width="3" height="3" fill="#fff"/><rect x="12" y="1" width="3" height="3" fill="#fff"/><rect x="7.500" y="6.500" width="3" height="3" fill="#fff"/><rect x="3" y="11.500" width="3" height="3" fill="#fff"/><rect x="12" y="10.500" width="3" height="3" fill="#fff"/></svg>
<div class="abs" style="left:1546px;top:399px;width:28px;height:28px;border-radius:7.500px;background:#338ad6"></div>
<svg style="left:1551.3px;top:404.5px" width="17" height="17" viewBox="0 0 17 17"><path d="M.4 0v16.600H17" fill="none" stroke="#bcdaf4" stroke-width=".6"/><g fill="#fff"><circle cx="7" cy="3.800" r="1.500"/><circle cx="14.500" cy="4.200" r="1.700"/><circle cx="10" cy="7" r="1.600"/><circle cx="8" cy="8.500" r="1.500"/><circle cx="5.500" cy="10.500" r="1.600"/><circle cx="4" cy="13" r="1.500"/></g></svg>
<div class="abs" style="left:1592px;top:399px;width:28px;height:28px;border-radius:7.500px;background:#338ad6"></div>
<svg style="left:1597.3px;top:404.5px" width="17" height="17" viewBox="0 0 17 17"><path d="M.4 2v13H17" fill="none" stroke="#9ccbf0" stroke-width=".7"/><g fill="#cfe5f8"><circle cx="4" cy="8.500" r=".7"/><circle cx="9" cy="10.500" r=".7"/><circle cx="12" cy="6" r=".7"/><circle cx="16.500" cy="7.500" r=".7"/></g><path d="M3 10l12-5" stroke="#7db8ec" stroke-width=".5"/></svg>
<div class="abs" style="left:1638px;top:399px;width:28px;height:28px;border-radius:7.500px;background:#338ad6"></div>
<svg style="left:1643.3px;top:404.5px" width="17" height="17" viewBox="0 0 17 17"><g fill="none" stroke="#fff" stroke-width="1.100"><rect x="1.300" y="2.300" width="14.500" height="13" rx="1.200"/><path d="M1.300 6h14.500"/></g><path d="M6 6v9" stroke="#a9d0f2" stroke-width="1.100"/></svg>
<div class="abs" style="left:1500px;top:434px;width:28px;height:28px;border-radius:7.500px;background:#338ad6"></div>
<svg style="left:1505.3px;top:439.5px" width="17" height="17" viewBox="0 0 17 17"><path d="M5 1h7l4.500 4.500v6L12 16.500H5L.5 12V5.500z" fill="none" stroke="#fff" stroke-width=".9"/><path d="M8.500 1H12l4.500 4.500v6l-3.500 4-4.500-6z" fill="#fff"/></svg>
<div class="abs" style="left:1546px;top:434px;width:28px;height:28px;border-radius:7.500px;background:#338ad6"></div>
<svg style="left:1551.3px;top:439.5px" width="17" height="17" viewBox="0 0 17 17"><path d="M5 .5h7l5 5v6l-5 5H5l-5-5v-6z" fill="#fff"/><circle cx="8.500" cy="9" r="4" fill="#338ad6"/><path d="M1.500 6L5.500 1.500l2 1.500-3.500 4z" fill="#338ad6" opacity=".55"/></svg>
<div class="abs" style="left:1592px;top:434px;width:28px;height:28px;border-radius:7.500px;background:#338ad6"></div>
<svg style="left:1597.3px;top:439.5px" width="17" height="17" viewBox="0 0 17 17"><path d="M.4 0v16.600H16" fill="none" stroke="#fff" stroke-width=".8"/><rect x="2" y="2" width="4.500" height="14.500" fill="#fff"/><rect x="2.800" y="13.500" width="2.500" height="2.500" fill="#338ad6"/><rect x="9.500" y="2" width="4" height="8" fill="#fff"/><path d="M8 16.500V10l2.500 2.500L13 9.500v7" fill="none" stroke="#fff" stroke-width=".9"/><path d="M13.500 5.500l1 2 2.200.2-1.700 1.400.6 2.100-2.100-1.200-1.800 1.200.5-2.100-1.500-1.500 2-.2z" fill="#fff"/><path d="M13.500 7.800l.4.800.9.100-.7.600.2.900-.8-.5-.8.500.2-.9-.6-.6.800-.1z" fill="#338ad6"/></svg>
<div class="abs" style="left:1638px;top:434px;width:28px;height:28px;border-radius:7.500px;background:#338ad6"></div>
<svg style="left:1643.3px;top:439.5px" width="17" height="17" viewBox="0 0 17 17"><path d="M.4 0v16.600H16" fill="none" stroke="#fff" stroke-width=".8"/><rect x="2" y="2" width="4.500" height="14.500" fill="#fff"/><rect x="2.800" y="13.500" width="2.500" height="2.500" fill="#338ad6"/><rect x="9.500" y="2" width="4" height="8" fill="#fff"/><path d="M8 16.500V10l2.500 2.500L13 9.500v7" fill="none" stroke="#fff" stroke-width=".9"/><path d="M13.500 5.500l1 2 2.200.2-1.700 1.400.6 2.100-2.100-1.200-1.800 1.200.5-2.100-1.500-1.500 2-.2z" fill="#fff"/><path d="M13.500 7.800l.4.800.9.100-.7.600.2.900-.8-.5-.8.500.2-.9-.6-.6.800-.1z" fill="#338ad6"/></svg>
<div class="abs" style="left:1500px;top:469px;width:28px;height:28px;border-radius:7.500px;background:#338ad6"></div>
<svg style="left:1505.3px;top:474.5px" width="17" height="17" viewBox="0 0 17 17"><circle cx="8.500" cy="8" r="6.300" fill="#fff"/><path d="M6 .8A8 8 0 0 0 6 15.500" fill="none" stroke="#fff" stroke-width=".8"/><path d="M3 16.600h12M5 15.300c3 1.200 6 .8 9-1" fill="none" stroke="#fff" stroke-width=".7"/></svg>
<div class="abs" style="left:1546px;top:469px;width:28px;height:28px;border-radius:7.500px;background:#338ad6"></div>
<svg style="left:1551.3px;top:474.5px" width="17" height="17" viewBox="0 0 17 17"><g fill="none" stroke="#dcecfa" stroke-width=".6"><path d="M8.500 .5L15 6v10.500H2V6z"/><path d="M8.500 .5v8M8.500 8.500L2 6M8.500 8.500L15 6M8.500 8.500L2 16.500M8.500 8.500L15 16.500M4 13h9l2 3.500M4 13l-2 3.500"/></g></svg>
<div class="abs" style="left:1592px;top:469px;width:28px;height:28px;border-radius:7.500px;background:#338ad6"></div>
<svg style="left:1597.3px;top:474.5px" width="17" height="17" viewBox="0 0 17 17"><rect x="0" y="4.500" width="17" height="9" fill="#fff"/><path d="M0 7c4-2 6 1.500 9 0s5-1 8 0M0 9.500c4 1.500 6-1 9 0s5 1.500 8 0M0 11.500c4-1 6 1 9 0s5-1 8 .3" fill="none" stroke="#338ad6" stroke-width=".8"/></svg>
<div class="t" style="left:1492.50px;top:528px;font-size:11px;letter-spacing:0.205px;color:#a9aeb7;font-weight:bold;">Y-AXIS</div>
<div class="abs" style="left:1496px;top:551px;width:184px;height:30px;background:#252b37;border:1px solid #3b404b;border-radius:5px"></div>
<svg style="left:1506px;top:562.5px" width="9" height="6" viewBox="0 0 9 6"><path d="M.7 .8L4.500 4.700 8.300 .8" fill="none" stroke="#c6cad1" stroke-width="1.200"/></svg>
<div class="t" style="left:1525.00px;top:560px;font-size:12px;letter-spacing:-0.487px;color:#e4e6ea;font-weight:bold;">Bonus (Input Data (Pri...</div>
<div class="t" style="left:1492.50px;top:609px;font-size:11px;letter-spacing:0.104px;color:#a9aeb7;font-weight:bold;">X-AXIS</div>
<div class="abs" style="left:1496px;top:631px;width:184px;height:30px;background:#252b37;border:1px solid #3b404b;border-radius:5px"></div>
<svg style="left:1506px;top:642.5px" width="9" height="6" viewBox="0 0 9 6"><path d="M.7 .8L4.500 4.700 8.300 .8" fill="none" stroke="#c6cad1" stroke-width="1.200"/></svg>
<div class="t" style="left:1525.00px;top:640px;font-size:12px;letter-spacing:-0.459px;color:#e4e6ea;font-weight:bold;">Sum of Salary (Input ...</div>
<div class="t" style="left:1492.50px;top:689px;font-size:11px;letter-spacing:-0.556px;color:#a9aeb7;font-weight:bold;">LEGEND</div>
<div class="abs" style="left:1496px;top:711px;width:184px;height:30px;background:#252b37;border:1px solid #3b404b;border-radius:5px"></div>
<svg style="left:1506px;top:722.5px" width="9" height="6" viewBox="0 0 9 6"><path d="M.7 .8L4.500 4.700 8.300 .8" fill="none" stroke="#c6cad1" stroke-width="1.200"/></svg>
<div class="t" style="left:1525.00px;top:720px;font-size:12px;letter-spacing:-0.466px;color:#e4e6ea;font-weight:bold;">First_Name (Input Dat...</div>
<div class="t" style="left:1712.00px;top:192px;font-size:15.5px;letter-spacing:-0.399px;color:#f2f2f2;font-weight:bold;">Data</div>
<svg style="left:1894px;top:194px" width="7" height="11" viewBox="0 0 7 11"><path d="M1 1l4.500 4.500L1 10" fill="none" stroke="#aeb3bb" stroke-width="1.300"/></svg>
<div class="abs" style="left:1699px;top:222px;width:221px;height:1px;background:#3d3d3d;"></div>
<div class="abs" style="left:1711px;top:233px;width:199px;height:29px;background:#2d2d2d;border:1px solid #3c3c3c;border-radius:4px"></div>
<svg style="left:1723px;top:241px" width="13" height="13" viewBox="0 0 13 13"><circle cx="5.600" cy="5.600" r="4.600" fill="none" stroke="#a4a8ae" stroke-width="1.100"/><path d="M9 9l3 3" stroke="#a4a8ae" stroke-width="1.100"/></svg>
<div class="t" style="left:1747.70px;top:242.5px;font-size:12px;letter-spacing:-0.267px;color:#b3b8c0;">Search columns...</div>
<div class="abs" style="left:1699px;top:273px;width:221px;height:1px;background:#3d3d3d;"></div>
<svg style="left:1712px;top:295px" width="8" height="6" viewBox="0 0 8 6"><path d="M1 1l3 3 3-3" fill="none" stroke="#7f858e" stroke-width="1.100"/></svg>
<svg style="left:1726px;top:293px" width="8.700" height="10.500" viewBox="0 0 9.500 12"><path d="M1.200 .6h4.500L9 4v6.500a1 1 0 0 1-1 1H1.200a1 1 0 0 1-1-1v-9a1 1 0 0 1 1-.9z" fill="none" stroke="#36b3ee" stroke-width="1.100"/><path d="M5.500 .6V4H9" fill="none" stroke="#36b3ee" stroke-width="1"/><path d="M2.500 6.300h1.300M5.200 6.300h1.300M2.500 8.500h1.300M5.200 8.500h1.300" stroke="#36b3ee" stroke-width="1.100"/></svg>
<div class="t" style="left:1741.00px;top:291.5px;font-size:12px;letter-spacing:-0.556px;color:#cfd2d7;font-weight:bold;">1. Input (Prism_AutoFiel...</div>
<div class="t" style="left:1884.50px;top:285.5px;font-size:11px;letter-spacing:-1.027px;color:#8b919b;">(11</div>
<div class="t" style="left:1884.50px;top:300px;font-size:11px;letter-spacing:-0.285px;color:#8b919b;">cols)</div>
<div class="abs" style="left:1721px;top:320.9px;width:189px;height:35.7px;background:#1e2a4b;border-radius:6px"></div>
<div class="abs" style="left:1731.500px;top:332.5px;width:13px;height:13px;border-radius:1.500px;background:#e9e9e9"></div>
<svg style="left:1733.500px;top:335px" width="9" height="8" viewBox="0 0 9 8"><path d="M.8 4l2.500 2.600L8.300 1" fill="none" stroke="#1d2a4a" stroke-width="1.300"/></svg>
<svg style="left:1757px;top:334px" width="8" height="10" viewBox="0 0 8 10"><path d="M7.300 1.800V.6H.8L4.300 5 .8 9.400h6.500V8.200" fill="none" stroke="#7fb2f5" stroke-width="1.350" stroke-linejoin="round"/></svg>
<div class="t" style="left:1774.50px;top:333px;font-size:12px;letter-spacing:-0.866px;color:#8ec0ff;font-weight:bold;">Bonus</div>
<div class="abs" style="left:1721px;top:356.9px;width:189px;height:35.7px;background:#1e2a4b;border-radius:6px"></div>
<div class="abs" style="left:1731.500px;top:368.5px;width:13px;height:13px;border-radius:1.500px;background:#e9e9e9"></div>
<svg style="left:1733.500px;top:371px" width="9" height="8" viewBox="0 0 9 8"><path d="M.8 4l2.500 2.600L8.300 1" fill="none" stroke="#1d2a4a" stroke-width="1.300"/></svg>
<svg style="left:1757px;top:370px" width="8" height="10" viewBox="0 0 8 10"><path d="M7.300 1.800V.6H.8L4.300 5 .8 9.400h6.500V8.200" fill="none" stroke="#7fb2f5" stroke-width="1.350" stroke-linejoin="round"/></svg>
<div class="t" style="left:1774.50px;top:369px;font-size:12px;letter-spacing:-0.422px;color:#8ec0ff;font-weight:bold;">Salary</div>
<div class="abs" style="left:1731.500px;top:404.5px;width:13px;height:13px;border-radius:1.500px;border:1.500px solid #dedede"></div>
<div class="t" style="left:1774.50px;top:405px;font-size:12px;letter-spacing:-0.595px;color:#b9bcc2;font-weight:bold;">Join_Date</div>
<div class="abs" style="left:1731.500px;top:440.5px;width:13px;height:13px;border-radius:1.500px;border:1.500px solid #dedede"></div>
<div class="t" style="left:1774.50px;top:441px;font-size:12px;letter-spacing:-0.670px;color:#b9bcc2;font-weight:bold;">Last_Name</div>
<div class="abs" style="left:1731.500px;top:476.5px;width:13px;height:13px;border-radius:1.500px;border:1.500px solid #dedede"></div>
<svg style="left:1757px;top:478px" width="8" height="10" viewBox="0 0 8 10"><path d="M7.300 1.800V.6H.8L4.300 5 .8 9.400h6.500V8.200" fill="none" stroke="#8c929c" stroke-width="1.350" stroke-linejoin="round"/></svg>
<div class="t" style="left:1774.50px;top:477px;font-size:12px;letter-spacing:-0.669px;color:#b9bcc2;font-weight:bold;">Record_ID</div>
<div class="abs" style="left:1731.500px;top:512.5px;width:13px;height:13px;border-radius:1.500px;border:1.500px solid #dedede"></div>
<svg style="left:1757px;top:514px" width="8" height="10" viewBox="0 0 8 10"><path d="M7.300 1.800V.6H.8L4.300 5 .8 9.400h6.500V8.200" fill="none" stroke="#8c929c" stroke-width="1.350" stroke-linejoin="round"/></svg>
<div class="t" style="left:1774.50px;top:513px;font-size:12px;letter-spacing:-0.569px;color:#b9bcc2;font-weight:bold;">Bin Values</div>
<div class="abs" style="left:1731.500px;top:548.5px;width:13px;height:13px;border-radius:1.500px;border:1.500px solid #dedede"></div>
<div class="t" style="left:1774.50px;top:549px;font-size:12px;letter-spacing:-0.368px;color:#b9bcc2;font-weight:bold;">Department</div>
<div class="abs" style="left:1721px;top:572.9px;width:189px;height:35.7px;background:#1e2a4b;border-radius:6px"></div>
<div class="abs" style="left:1731.500px;top:584.5px;width:13px;height:13px;border-radius:1.500px;background:#e9e9e9"></div>
<svg style="left:1733.500px;top:587px" width="9" height="8" viewBox="0 0 9 8"><path d="M.8 4l2.500 2.600L8.300 1" fill="none" stroke="#1d2a4a" stroke-width="1.300"/></svg>
<div class="t" style="left:1774.50px;top:585px;font-size:12px;letter-spacing:-0.586px;color:#8ec0ff;font-weight:bold;">First_Name</div>
<div class="abs" style="left:1912px;top:333px;width:6px;height:208px;background:#b9aaac;border-radius:3px"></div>
<svg style="left:1911px;top:323px" width="8" height="6" viewBox="0 0 8 6"><path d="M4 .5L7.500 5H.5z" fill="#d9cfd0"/></svg>
<svg style="left:1911px;top:613px" width="8" height="6" viewBox="0 0 8 6"><path d="M4 5.500L7.500 1H.5z" fill="#d9cfd0"/></svg>
<div class="abs" style="left:1699px;top:628px;width:221px;height:1px;background:#3d3d3d;"></div>
<div class="abs" style="left:1699px;top:663px;width:221px;height:1px;background:#3d3d3d;"></div>
<svg style="left:1714px;top:641px" width="7" height="10" viewBox="0 0 7 10"><path d="M1 1l4 4-4 4" fill="none" stroke="#9aa0a8" stroke-width="1.200"/></svg>
<svg style="left:1732.500px;top:639px" width="12" height="15" viewBox="0 0 9.500 12"><path d="M1.200 .6h4.500L9 4v6.500a1 1 0 0 1-1 1H1.200a1 1 0 0 1-1-1v-9a1 1 0 0 1 1-.9z" fill="none" stroke="#36b3ee" stroke-width="1.100"/><path d="M5.500 .6V4H9" fill="none" stroke="#36b3ee" stroke-width="1"/><path d="M2.500 6.300h1.300M5.200 6.300h1.300M2.500 8.500h1.300M5.200 8.500h1.300" stroke="#36b3ee" stroke-width="1.100"/></svg>
<div class="t" style="left:1751.00px;top:640px;font-size:12px;letter-spacing:-0.427px;color:#d4d7dc;font-weight:bold;">2. Auto Field</div>
<div class="t" style="left:1871.00px;top:640.5px;font-size:11px;letter-spacing:-0.318px;color:#8b919b;">(11 cols)</div>
<div class="abs" style="left:-1px;top:198px;width:770px;height:601px;border-radius:9px;background:#f0f0f0;overflow:hidden;box-shadow:0 3px 22px 2px rgba(0,0,0,.26),0 0 0 1px rgba(0,0,0,.2)">
<div class="abs" style="left:1px;top:0;width:769px;height:601px">
<div class="abs" style="left:8px;top:5px;width:96px;height:30px;background:#f8f8f8;border-radius:8px"></div>
<svg style="left:19px;top:14px" width="17" height="12" viewBox="0 0 17 12"><path d="M.5 .5h3l2.300 6.500L8.500 1.500 11.200 7 13.500 .5h3L12.700 11.500H9.800L8.500 7.300 7.200 11.500H4.300z" fill="#f0352b"/><path d="M8.500 3.500L10 7.500 8.500 11 7 7.500z" fill="#f8f8f8"/></svg>
<div class="t" style="left:41.50px;top:14px;font-size:13px;letter-spacing:-1.473px;color:#2b2b2b;font-family:'DejaVu Sans',sans-serif;">Home</div>
<div class="abs" style="left:108px;top:5px;width:240px;height:30px;background:#fff;border-radius:8px"></div>
<div class="abs" style="left:120px;top:12px;width:16px;height:16px;background:#18a15f;border-radius:3px"></div>
<div class="t" style="left:123.30px;top:13.5px;font-size:13px;color:#fff;font-weight:bold;font-family:'DejaVu Sans',sans-serif;">S</div>
<div class="t" style="left:142.30px;top:14px;font-size:12.5px;letter-spacing:-1.008px;color:#2b2b2b;font-family:'DejaVu Sans',sans-serif;">Prism_AutoField_TestData.csv</div>
<svg style="left:305px;top:15px" width="12" height="11" viewBox="0 0 12 11"><rect x=".6" y=".6" width="10.800" height="7.300" rx="1" fill="none" stroke="#9a9a9a" stroke-width="1.100"/><path d="M3.500 10.400h5M6 8v2.400" stroke="#9a9a9a" stroke-width="1.100"/></svg>
<svg style="left:327px;top:15px" width="10" height="10" viewBox="0 0 10 10"><path d="M.7 .7l8.600 8.600M9.300 .7L.7 9.300" stroke="#8a8a8a" stroke-width="1.100"/></svg>
<svg style="left:364px;top:14px" width="12" height="12" viewBox="0 0 12 12"><path d="M6 0v12M0 6h12" stroke="#3d4a6b" stroke-width="1.700"/></svg>
<div class="t" style="left:390.40px;top:14.5px;font-size:12.5px;letter-spacing:-1.288px;color:#4d5a7c;font-family:'DejaVu Sans',sans-serif;">New</div>
<svg style="left:473px;top:12.5px" width="14" height="14.5" viewBox="0 0 14 14.5"><rect x=".7" y="3" width="10.500" height="10.800" rx="1.500" fill="none" stroke="#3a3a3a" stroke-width="1.200"/><path d="M3.300 3V2a1.300 1.300 0 0 1 1.300-1.300h7.400A1.300 1.300 0 0 1 13.300 2v8a1.300 1.300 0 0 1-1.300 1.300h-.8" fill="none" stroke="#3a3a3a" stroke-width="1.200"/></svg>
<div class="abs" style="left:514px;top:8px;width:121px;height:24px;background:linear-gradient(90deg,#41c0f8 0%,#2f8df6 30%,#2a5df5 62%,#8b53f0 100%);border-radius:12px"></div>
<svg style="left:531px;top:12px" width="11" height="16" viewBox="0 0 11 16"><path d="M7 0L.5 9h4L3.500 16 10.500 6.500H6z" fill="#fff"/></svg>
<div class="t" style="left:547.40px;top:13.5px;font-size:12.5px;letter-spacing:-1.146px;color:#fff;font-family:'DejaVu Sans',sans-serif;text-shadow:0 0 .4px #fff;">Upgrade now</div>
<svg style="left:663px;top:19px" width="11" height="1.2" viewBox="0 0 11 1.2"><path d="M0 .6h11" stroke="#222" stroke-width="1.200"/></svg>
<svg style="left:704.3px;top:15.300000000000011px" width="10" height="10" viewBox="0 0 10 10"><rect x=".6" y=".6" width="8.800" height="8.800" fill="none" stroke="#222" stroke-width="1.200"/></svg>
<svg style="left:743.8px;top:15.300000000000011px" width="10" height="10" viewBox="0 0 10 10"><path d="M.4 .4l9.200 9.200M9.600 .4L.4 9.600" stroke="#222" stroke-width="1.200"/></svg>
<svg style="left:19.5px;top:50px" width="9" height="10" viewBox="0 0 9 10"><path d="M0 1h9M0 5h9M0 9h9" stroke="#333" stroke-width="1"/></svg>
<div class="t" style="left:36.20px;top:50px;font-size:12px;letter-spacing:-0.570px;color:#2b2b2b;font-family:'DejaVu Sans',sans-serif;">File</div>
<div class="abs" style="left:66px;top:45px;width:1px;height:20px;background:#d5d5d5;"></div>
<svg style="left:80.5px;top:54px" width="13" height="2" viewBox="0 0 13 2"><circle cx="1.200" cy="1" r="1" fill="#444"/><circle cx="6.500" cy="1" r="1" fill="#444"/><circle cx="11.800" cy="1" r="1" fill="#444"/></svg>
<div class="abs" style="left:107px;top:45px;width:1px;height:20px;background:#d5d5d5;"></div>
<div class="t" style="left:118.20px;top:50.5px;font-size:12.5px;letter-spacing:-0.988px;color:#127a48;font-weight:bold;font-family:'DejaVu Sans',sans-serif;">Home</div>
<div class="abs" style="left:118px;top:66px;width:37px;height:2px;background:#127a48;border-radius:1px"></div>
<div class="t" style="left:167.80px;top:51px;font-size:12px;letter-spacing:-0.386px;color:#2b2b2b;font-family:'DejaVu Sans',sans-serif;">Insert</div>
<div class="t" style="left:216.00px;top:51px;font-size:12px;letter-spacing:-0.260px;color:#2b2b2b;font-family:'DejaVu Sans',sans-serif;">Page Layout</div>
<div class="t" style="left:303.90px;top:51px;font-size:12px;letter-spacing:-0.247px;color:#2b2b2b;font-family:'DejaVu Sans',sans-serif;">Formulas</div>
<div class="t" style="left:372.00px;top:51px;font-size:12px;letter-spacing:-0.538px;color:#2b2b2b;font-family:'DejaVu Sans',sans-serif;">Data</div>
<div class="abs" style="left:412px;top:41px;width:19px;height:28px;background:#dadada;border-radius:4px"></div>
<svg style="left:419px;top:50px" width="6" height="10" viewBox="0 0 6 10"><path d="M.8 .8L5 5 .8 9.200" fill="none" stroke="#333" stroke-width="1.200"/></svg>
<svg style="left:451px;top:48.5px" width="15" height="15" viewBox="0 0 15 15"><circle cx="6" cy="6" r="5" fill="none" stroke="#333" stroke-width="1.300"/><path d="M9.700 9.700L14.300 14.300" stroke="#333" stroke-width="1.300"/></svg>
<svg style="left:530.5px;top:49px" width="17" height="14" viewBox="0 0 17 14"><path d="M6 12.300H4.300A3.700 3.700 0 0 1 3.800 5 5.200 5.200 0 0 1 13.800 4.500 3.600 3.600 0 0 1 16 8" fill="none" stroke="#3a3a3a" stroke-width="1.200"/><circle cx="12" cy="10.500" r="3.300" fill="#8a93b8"/><path d="M10.300 10.500h3.400" stroke="#fff" stroke-width="1.100"/></svg>
<div class="abs" style="left:566px;top:43px;width:57px;height:24px;background:#fff;border:1.500px solid #2f6bed;border-radius:4.500px"></div>
<div class="t" style="left:572.40px;top:50px;font-size:12px;letter-spacing:-1.206px;color:#2462e6;font-family:'DejaVu Sans',sans-serif;">Share</div>
<svg style="left:610px;top:53px" width="6" height="4" viewBox="0 0 6 4"><path d="M.5 .5L3 3 5.500 .5" fill="none" stroke="#2462e6" stroke-width="1"/></svg>
<div class="abs" style="left:638px;top:45px;width:1px;height:20px;background:#d0d0d0;"></div>
<svg style="left:657px;top:49px" width="23" height="13" viewBox="0 0 23 13"><path d="M1 2.500h3M2.500 1v3" stroke="#333" stroke-width="1"/><path d="M6 2.500h9.500l-1.500 9H3l.8-5" fill="none" stroke="#333" stroke-width="1.100"/><path d="M6.500 6h6M6 8.700h6" stroke="#333" stroke-width="1"/><path d="M17.500 5.500L20 8l2.500-2.500" fill="none" stroke="#333" stroke-width="1.300"/></svg>
<svg style="left:704px;top:54px" width="13" height="2" viewBox="0 0 13 2"><circle cx="1.200" cy="1" r="1.100" fill="#333"/><circle cx="6.500" cy="1" r="1.100" fill="#333"/><circle cx="11.800" cy="1" r="1.100" fill="#333"/></svg>
<svg style="left:740px;top:51px" width="15" height="8" viewBox="0 0 15 8"><path d="M.5 7.500L7.500 .7 14.500 7.500" fill="none" stroke="#444" stroke-width="1.100"/></svg>
<div class="abs" style="left:12px;top:75px;width:745px;height:79px;background:#fff;border-radius:8px;box-shadow:0 0 3px rgba(0,0,0,.22)"></div>
<div class="abs" style="left:175px;top:79px;width:1px;height:71px;background:#dcdcdc;"></div>
<div class="abs" style="left:235.7px;top:79px;width:1px;height:71px;background:#dcdcdc;"></div>
<div class="abs" style="left:329px;top:79px;width:1px;height:71px;background:#dcdcdc;"></div>
<div class="abs" style="left:410px;top:79px;width:1px;height:71px;background:#dcdcdc;"></div>
<div class="abs" style="left:473px;top:79px;width:1px;height:71px;background:#dcdcdc;"></div>
<div class="abs" style="left:540px;top:79px;width:1px;height:71px;background:#dcdcdc;"></div>
<div class="abs" style="left:615px;top:79px;width:1px;height:71px;background:#dcdcdc;"></div>
<svg style="left:40px;top:92px" width="20" height="20" viewBox="0 0 20 20"><path d="M8 6V2.500a2 2 0 0 1 4 0V6h5.500a1 1 0 0 1 1 1v3H1.500V7a1 1 0 0 1 1-1z" fill="none" stroke="#333" stroke-width="1.100"/><path d="M2.500 10L1 19.300h13c2 0 3-1.500 3.300-3.500L18 10" fill="none" stroke="#333" stroke-width="1.100"/><path d="M5 10h10" stroke="#e8602c" stroke-width="1.200"/><path d="M13.500 15v3" stroke="#333" stroke-width="1"/></svg>
<div class="t" style="left:30.50px;top:120.5px;font-size:11px;letter-spacing:-0.211px;color:#2b2b2b;font-family:'DejaVu Sans',sans-serif;">Format</div>
<div class="t" style="left:32.50px;top:136px;font-size:11px;letter-spacing:-0.287px;color:#2b2b2b;font-family:'DejaVu Sans',sans-serif;">Painter</div>
<svg style="left:91px;top:92px" width="21" height="20" viewBox="0 0 21 20"><path d="M5 3H1.300A.8.800 0 0 0 .5 3.800V18.700a.8.800 0 0 0 .8.800H9M12 3h3.500a.8.800 0 0 1 .8.800V7" fill="none" stroke="#333" stroke-width="1.100"/><path d="M5 4.500V2.500h2V1a1.500 1.500 0 0 1 3 0v1.500h2v2z" fill="none" stroke="#333" stroke-width="1.100"/><rect x="12" y="9.500" width="7.500" height="9.500" fill="none" stroke="#3b6fe0" stroke-width="1.200"/><rect x="13.800" y="11.300" width="4" height="6" fill="#c9d8fa"/></svg>
<div class="t" style="left:82.30px;top:119.5px;font-size:11px;letter-spacing:-0.338px;color:#2b2b2b;font-family:'DejaVu Sans',sans-serif;">Paste</div>
<svg style="left:113px;top:124px" width="6" height="4" viewBox="0 0 6 4"><path d="M.5 .5L3 3 5.500 .5" fill="none" stroke="#333" stroke-width="1.200"/></svg>
<svg style="left:131px;top:90.5px" width="17" height="15" viewBox="0 0 17 15"><path d="M4.500 0L12 11M12.500 0L5 11" stroke="#333" stroke-width="1.100"/><circle cx="3.300" cy="12" r="2.300" fill="none" stroke="#3b6fe0" stroke-width="1.200"/><circle cx="13.700" cy="12" r="2.300" fill="none" stroke="#3b6fe0" stroke-width="1.200"/></svg>
<svg style="left:133px;top:117.5px" width="16" height="16" viewBox="0 0 16 16"><path d="M5.500 10.500H1.300a.8.800 0 0 1-.8-.8V1.300a.8.800 0 0 1 .8-.8H8" fill="none" stroke="#3b6fe0" stroke-width="1.200"/><path d="M6.500 4.500h5L15.500 8.500v6.200a.8.800 0 0 1-.8.800H7.300a.8.800 0 0 1-.8-.8z" fill="none" stroke="#333" stroke-width="1.100"/><path d="M11.200 4.500v4.300h4.300" fill="none" stroke="#333" stroke-width="1.100"/></svg>
<svg style="left:154.5px;top:124px" width="6" height="4" viewBox="0 0 6 4"><path d="M.5 .5L3 3 5.500 .5" fill="none" stroke="#333" stroke-width="1.200"/></svg>
<svg style="left:197px;top:92.5px" width="18" height="18.5" viewBox="0 0 18 18.5"><path d="M.5 18.500L9 .5l8.500 18M3.500 12h11" fill="none" stroke="#333" stroke-width="1.200"/></svg>
<div class="t" style="left:189.30px;top:119.5px;font-size:11px;letter-spacing:0.013px;color:#2b2b2b;font-family:'DejaVu Sans',sans-serif;">Font</div>
<svg style="left:216.5px;top:124px" width="6" height="4" viewBox="0 0 6 4"><path d="M.5 .5L3 3 5.500 .5" fill="none" stroke="#333" stroke-width="1.200"/></svg>
<svg style="left:275.5px;top:95px" width="15" height="15" viewBox="0 0 15 15"><path d="M1 .6h13M4 7.500h7M0 14.400h15" stroke="#333" stroke-width="1.200"/></svg>
<div class="t" style="left:250.30px;top:119.5px;font-size:11px;letter-spacing:-0.107px;color:#2b2b2b;font-family:'DejaVu Sans',sans-serif;">Alignment</div>
<svg style="left:309.2px;top:124px" width="6" height="4" viewBox="0 0 6 4"><path d="M.5 .5L3 3 5.500 .5" fill="none" stroke="#333" stroke-width="1.200"/></svg>
<svg style="left:360px;top:93px" width="20" height="18" viewBox="0 0 20 18"><rect x=".6" y=".6" width="18.800" height="16.800" rx="1" fill="none" stroke="#333" stroke-width="1.100"/><path d="M10.500 5.500h6M10.500 9h6M10.500 12.500h6" stroke="#333" stroke-width="1.100"/><path d="M4.500 6.500L6.500 5v8" fill="none" stroke="#2f62e0" stroke-width="1.300"/></svg>
<div class="t" style="left:343.30px;top:119.5px;font-size:11px;letter-spacing:-0.165px;color:#2b2b2b;font-family:'DejaVu Sans',sans-serif;">Number</div>
<svg style="left:390px;top:124px" width="6" height="4" viewBox="0 0 6 4"><path d="M.5 .5L3 3 5.500 .5" fill="none" stroke="#333" stroke-width="1.200"/></svg>
<svg style="left:430.5px;top:91.5px" width="22" height="21" viewBox="0 0 22 21"><rect x="3" y="3" width="16" height="15" fill="none" stroke="#333" stroke-width="1.200"/><path d="M3 0v3H0M19 0v3h3M3 21v-3H0M19 21v-3h3" fill="none" stroke="#333" stroke-width="1.200"/></svg>
<div class="t" style="left:424.50px;top:119.5px;font-size:11px;letter-spacing:-0.358px;color:#2b2b2b;font-family:'DejaVu Sans',sans-serif;">Cells</div>
<svg style="left:452.3px;top:124px" width="6" height="4" viewBox="0 0 6 4"><path d="M.5 .5L3 3 5.500 .5" fill="none" stroke="#333" stroke-width="1.200"/></svg>
<svg style="left:497px;top:93px" width="21" height="19" viewBox="0 0 21 19"><rect x=".6" y=".6" width="13.500" height="12.500" rx="1" fill="none" stroke="#333" stroke-width="1.100"/><path d="M.6 5.800h13.500M7.300 .6v12.500" stroke="#333" stroke-width="1.100"/><path d="M18 6.500l2 2-7.500 8-3 1 1-3z" fill="#fff" stroke="#e8602c" stroke-width="1.200" stroke-linejoin="round"/></svg>
<div class="t" style="left:487.00px;top:119.5px;font-size:11px;letter-spacing:-0.593px;color:#2b2b2b;font-family:'DejaVu Sans',sans-serif;">Styles</div>
<svg style="left:520px;top:124px" width="6" height="4" viewBox="0 0 6 4"><path d="M.5 .5L3 3 5.500 .5" fill="none" stroke="#333" stroke-width="1.200"/></svg>
<svg style="left:567.5px;top:93px" width="19" height="18" viewBox="0 0 19 18"><path d="M18 4V.6H1L9.500 9 1 17.400h17V14" fill="none" stroke="#333" stroke-width="1.200"/></svg>
<div class="t" style="left:554.50px;top:119.5px;font-size:11px;letter-spacing:-0.259px;color:#2b2b2b;font-family:'DejaVu Sans',sans-serif;">Editing</div>
<svg style="left:594px;top:124px" width="6" height="4" viewBox="0 0 6 4"><path d="M.5 .5L3 3 5.500 .5" fill="none" stroke="#333" stroke-width="1.200"/></svg>
<svg style="left:644.5px;top:98px" width="20" height="6" viewBox="0 0 20 6"><circle cx="3" cy="3" r="2.300" fill="none" stroke="#333" stroke-width="1.100"/><circle cx="10" cy="3" r="2.300" fill="none" stroke="#333" stroke-width="1.100"/><circle cx="17" cy="3" r="2.300" fill="none" stroke="#333" stroke-width="1.100"/></svg>
<div class="t" style="left:629.30px;top:119.5px;font-size:11px;letter-spacing:-0.427px;color:#2b2b2b;font-family:'DejaVu Sans',sans-serif;">Settings</div>
<svg style="left:674px;top:124px" width="6" height="4" viewBox="0 0 6 4"><path d="M.5 .5L3 3 5.500 .5" fill="none" stroke="#333" stroke-width="1.200"/></svg>
<div class="abs" style="left:0px;top:155px;width:769px;height:48px;background:#ecf1fd;"></div>
<svg style="left:44.5px;top:171.5px" width="15" height="15" viewBox="0 0 15 15"><path d="M7.500 .3l6.200 3.600v7.200L7.500 14.700 1.300 11.100V3.900z" fill="#4a55f0"/><path d="M7.500 .3l6.200 3.600L7.500 7.500z" fill="#37b6f6"/><path d="M8.500 3.500L5 8h2.300L6.500 11.500 10 7H7.700z" fill="#fff"/></svg>
<div class="t" style="left:68.20px;top:174.5px;font-size:11.5px;letter-spacing:-0.593px;color:#222;font-family:'DejaVu Sans',sans-serif;">Upgrade to unlock unlimited PDF features, advanced AI tools, and 100,000+ premium templates.</div>
<div class="abs" style="left:599px;top:167px;width:95px;height:24px;background:#7a40f2;border-radius:5.500px"></div>
<div class="t" style="left:609.40px;top:174.5px;font-size:11.5px;letter-spacing:-1.062px;color:#fff;font-weight:bold;font-family:'DejaVu Sans',sans-serif;">Upgrade now</div>
<svg style="left:743.5px;top:173.5px" width="11" height="11" viewBox="0 0 11 11"><path d="M.5 .5l10 10M10.500 .5l-10 10" stroke="#333" stroke-width="1.100"/></svg>
<div class="abs" style="left:12px;top:209px;width:163px;height:28px;background:#fff;border:1px solid #d6d6d6;border-radius:5px"></div>
<div class="t" style="left:75.00px;top:217px;font-size:13.5px;letter-spacing:0.575px;color:#333;font-family:'DejaVu Sans',sans-serif;">B9</div>
<svg style="left:158.5px;top:220.5px" width="9" height="5.5" viewBox="0 0 9 5.5"><path d="M.5 .5L4.500 4.500 8.500 .5" fill="none" stroke="#555" stroke-width="1"/></svg>
<div class="abs" style="left:183px;top:209px;width:573.5px;height:28px;background:#fff;border:1px solid #d6d6d6;border-radius:5px"></div>
<svg style="left:207px;top:216px" width="15" height="15" viewBox="0 0 15 15"><circle cx="6" cy="6" r="5" fill="none" stroke="#444" stroke-width="1.100"/><path d="M9.700 9.700L13.500 13.500M3.500 6h5" stroke="#444" stroke-width="1.100"/></svg>
<div class="t" style="left:237.50px;top:215px;font-size:15px;color:#333;font-family:'Liberation Serif',serif;font-style:italic;">f</div>
<div class="t" style="left:243.50px;top:218px;font-size:12.5px;color:#333;font-family:'Liberation Serif',serif;font-style:italic;">x</div>
<div class="abs" style="left:265px;top:214.5px;width:1px;height:17px;background:#b5b5b5;"></div>
<div class="abs" style="left:0px;top:244px;width:757px;height:307px;background:#fff;"></div>
<div class="abs" style="left:0px;top:244px;width:757px;height:24px;background:#efefef;"></div>
<div class="abs" style="left:0px;top:244px;width:31px;height:307px;background:#efefef;"></div>
<div class="abs" style="left:104px;top:244px;width:71px;height:24px;background:#dadada;"></div>
<div class="abs" style="left:0px;top:428px;width:31px;height:19px;background:#dadada;"></div>
<svg style="left:13px;top:253px" width="8" height="7" viewBox="0 0 8 7"><path d="M7.500 0v6.500H.5z" fill="#6e6e6e"/></svg>
<div class="t" style="left:63.05px;top:250px;font-size:13px;color:#4a4a4a;font-family:'DejaVu Sans',sans-serif;">A</div>
<div class="t" style="left:135.04px;top:250px;font-size:13px;color:#1a7f4d;font-family:'DejaVu Sans',sans-serif;">B</div>
<div class="t" style="left:206.96px;top:250px;font-size:13px;color:#4a4a4a;font-family:'DejaVu Sans',sans-serif;">C</div>
<div class="t" style="left:278.49px;top:250px;font-size:13px;color:#4a4a4a;font-family:'DejaVu Sans',sans-serif;">D</div>
<div class="t" style="left:351.39px;top:250px;font-size:13px;color:#4a4a4a;font-family:'DejaVu Sans',sans-serif;">E</div>
<div class="t" style="left:423.76px;top:250px;font-size:13px;color:#4a4a4a;font-family:'DejaVu Sans',sans-serif;">F</div>
<div class="t" style="left:494.46px;top:250px;font-size:13px;color:#4a4a4a;font-family:'DejaVu Sans',sans-serif;">G</div>
<div class="t" style="left:566.61px;top:250px;font-size:13px;color:#4a4a4a;font-family:'DejaVu Sans',sans-serif;">H</div>
<div class="t" style="left:641.58px;top:250px;font-size:13px;color:#4a4a4a;font-family:'DejaVu Sans',sans-serif;">I</div>
<div class="t" style="left:713.58px;top:250px;font-size:13px;color:#4a4a4a;font-family:'DejaVu Sans',sans-serif;">J</div>
<div class="abs" style="left:31px;top:268px;width:1px;height:283px;background:#d0d0d0;"></div>
<div class="abs" style="left:103px;top:244px;width:1px;height:307px;background:#dedede;"></div>
<div class="abs" style="left:175px;top:244px;width:1px;height:307px;background:#dedede;"></div>
<div class="abs" style="left:247px;top:244px;width:1px;height:307px;background:#dedede;"></div>
<div class="abs" style="left:319px;top:244px;width:1px;height:307px;background:#dedede;"></div>
<div class="abs" style="left:391px;top:244px;width:1px;height:307px;background:#dedede;"></div>
<div class="abs" style="left:463px;top:244px;width:1px;height:307px;background:#dedede;"></div>
<div class="abs" style="left:535px;top:244px;width:1px;height:307px;background:#dedede;"></div>
<div class="abs" style="left:607px;top:244px;width:1px;height:307px;background:#dedede;"></div>
<div class="abs" style="left:679px;top:244px;width:1px;height:307px;background:#dedede;"></div>
<div class="abs" style="left:751px;top:244px;width:1px;height:307px;background:#dedede;"></div>
<div class="abs" style="left:0px;top:267px;width:752px;height:1px;background:#dedede;"></div>
<div class="abs" style="left:0px;top:287px;width:752px;height:1px;background:#dedede;"></div>
<div class="abs" style="left:0px;top:307px;width:752px;height:1px;background:#dedede;"></div>
<div class="abs" style="left:0px;top:327px;width:752px;height:1px;background:#dedede;"></div>
<div class="abs" style="left:0px;top:347px;width:752px;height:1px;background:#dedede;"></div>
<div class="abs" style="left:0px;top:367px;width:752px;height:1px;background:#dedede;"></div>
<div class="abs" style="left:0px;top:387px;width:752px;height:1px;background:#dedede;"></div>
<div class="abs" style="left:0px;top:407px;width:752px;height:1px;background:#dedede;"></div>
<div class="abs" style="left:0px;top:427px;width:752px;height:1px;background:#dedede;"></div>
<div class="abs" style="left:0px;top:447px;width:752px;height:1px;background:#dedede;"></div>
<div class="abs" style="left:0px;top:467px;width:752px;height:1px;background:#dedede;"></div>
<div class="abs" style="left:0px;top:487px;width:752px;height:1px;background:#dedede;"></div>
<div class="abs" style="left:0px;top:507px;width:752px;height:1px;background:#dedede;"></div>
<div class="abs" style="left:0px;top:527px;width:752px;height:1px;background:#dedede;"></div>
<div class="abs" style="left:0px;top:547px;width:752px;height:1px;background:#dedede;"></div>
<div class="abs" style="left:751px;top:244px;width:1px;height:307px;background:#dedede;"></div>
<div class="abs" style="left:103px;top:265.5px;width:73px;height:2.5px;background:#1a8f57;"></div>
<div class="abs" style="left:30px;top:427px;width:2px;height:21px;background:#1a8f57;"></div>
<div class="t" style="left:34.20px;top:273px;font-size:12.5px;letter-spacing:0.087px;color:#111;font-family:'DejaVu Sans',sans-serif;">Record_ID</div>
<div class="abs" style="left:104px;top:270px;width:71px;height:19px;overflow:hidden"><div class="t" style="left:2.20px;top:3px;font-size:12.5px;color:#111;font-family:'DejaVu Sans',sans-serif;letter-spacing:0.2px;">First_Name</div></div>
<div class="t" style="left:178.20px;top:273px;font-size:12.5px;letter-spacing:0.000px;color:#111;font-family:'DejaVu Sans',sans-serif;">Last_Name</div>
<div class="abs" style="left:248px;top:270px;width:71px;height:19px;overflow:hidden"><div class="t" style="left:2.20px;top:3px;font-size:12.5px;color:#111;font-family:'DejaVu Sans',sans-serif;letter-spacing:-0.19px;">Department</div></div>
<div class="t" style="left:322.20px;top:273px;font-size:12.5px;letter-spacing:0.000px;color:#111;font-family:'DejaVu Sans',sans-serif;">Salary</div>
<div class="t" style="left:394.20px;top:273px;font-size:12.5px;letter-spacing:0.000px;color:#111;font-family:'DejaVu Sans',sans-serif;">Bonus</div>
<div class="t" style="left:466.20px;top:273px;font-size:12.5px;letter-spacing:0.000px;color:#111;font-family:'DejaVu Sans',sans-serif;">Join_Date</div>
<div class="t" style="left:538.20px;top:273px;font-size:12.5px;letter-spacing:-0.261px;color:#111;font-family:'DejaVu Sans',sans-serif;">Last_Login</div>
<div class="abs" style="left:608px;top:270px;width:71px;height:19px;overflow:hidden"><div class="t" style="left:2.20px;top:3px;font-size:12.5px;color:#111;font-family:'DejaVu Sans',sans-serif;letter-spacing:0.23px;">Test_Boolean</div></div>
<div class="t" style="left:682.20px;top:273px;font-size:12.5px;letter-spacing:0.212px;color:#111;font-family:'DejaVu Sans',sans-serif;">Test_Float</div>
<div class="t" style="left:93.05px;top:293px;font-size:12.5px;color:#111;font-family:'DejaVu Sans',sans-serif;">1</div>
<div class="t" style="left:106.20px;top:293px;font-size:12.5px;letter-spacing:0.000px;color:#111;font-family:'DejaVu Sans',sans-serif;">Ali</div>
<div class="t" style="left:178.20px;top:293px;font-size:12.5px;letter-spacing:0.000px;color:#111;font-family:'DejaVu Sans',sans-serif;">Khan</div>
<div class="t" style="left:250.20px;top:293px;font-size:12.5px;letter-spacing:0.000px;color:#111;font-family:'DejaVu Sans',sans-serif;">QA</div>
<div class="t" style="left:353.81px;top:293px;font-size:12.5px;letter-spacing:-0.915px;color:#111;font-family:'DejaVu Sans',sans-serif;">80000</div>
<div class="t" style="left:432.85px;top:293px;font-size:12.5px;letter-spacing:-0.915px;color:#111;font-family:'DejaVu Sans',sans-serif;">5000</div>
<div class="t" style="left:478.98px;top:293px;font-size:12.5px;letter-spacing:-0.265px;color:#111;font-family:'DejaVu Sans',sans-serif;">2/2/2026</div>
<div class="t" style="left:542.20px;top:293px;font-size:12.5px;letter-spacing:-3.496px;color:#111;font-family:'DejaVu Sans',sans-serif;">#########</div>
<div class="t" style="left:628.55px;top:293px;font-size:12.5px;letter-spacing:-0.867px;color:#111;font-family:'DejaVu Sans',sans-serif;">TRUE</div>
<div class="t" style="left:717.07px;top:293px;font-size:12.5px;letter-spacing:-0.771px;color:#111;font-family:'DejaVu Sans',sans-serif;">99.99</div>
<div class="t" style="left:93.05px;top:313px;font-size:12.5px;color:#111;font-family:'DejaVu Sans',sans-serif;">2</div>
<div class="t" style="left:106.20px;top:313px;font-size:12.5px;letter-spacing:0.000px;color:#111;font-family:'DejaVu Sans',sans-serif;">Sara</div>
<div class="t" style="left:178.20px;top:313px;font-size:12.5px;letter-spacing:0.000px;color:#111;font-family:'DejaVu Sans',sans-serif;">Ahmed</div>
<div class="abs" style="left:248px;top:310px;width:71px;height:19px;overflow:hidden"><div class="t" style="left:2.20px;top:3px;font-size:12.5px;color:#111;font-family:'DejaVu Sans',sans-serif;letter-spacing:-0.29px;">Development</div></div>
<div class="t" style="left:346.77px;top:313px;font-size:12.5px;letter-spacing:-0.915px;color:#111;font-family:'DejaVu Sans',sans-serif;">120000</div>
<div class="t" style="left:425.81px;top:313px;font-size:12.5px;letter-spacing:-0.915px;color:#111;font-family:'DejaVu Sans',sans-serif;">15000</div>
<div class="t" style="left:478.98px;top:313px;font-size:12.5px;letter-spacing:-0.265px;color:#111;font-family:'DejaVu Sans',sans-serif;">2/3/2026</div>
<div class="t" style="left:542.20px;top:313px;font-size:12.5px;letter-spacing:-3.496px;color:#111;font-family:'DejaVu Sans',sans-serif;">#########</div>
<div class="t" style="left:625.70px;top:313px;font-size:12.5px;letter-spacing:-0.358px;color:#111;font-family:'DejaVu Sans',sans-serif;">FALSE</div>
<div class="t" style="left:731.15px;top:313px;font-size:12.5px;letter-spacing:-0.676px;color:#111;font-family:'DejaVu Sans',sans-serif;">1.5</div>
<div class="t" style="left:93.05px;top:333px;font-size:12.5px;color:#111;font-family:'DejaVu Sans',sans-serif;">3</div>
<div class="t" style="left:106.20px;top:333px;font-size:12.5px;letter-spacing:0.000px;color:#111;font-family:'DejaVu Sans',sans-serif;">John</div>
<div class="t" style="left:178.20px;top:333px;font-size:12.5px;letter-spacing:0.000px;color:#111;font-family:'DejaVu Sans',sans-serif;">Smith</div>
<div class="t" style="left:250.20px;top:333px;font-size:12.5px;letter-spacing:0.000px;color:#111;font-family:'DejaVu Sans',sans-serif;">Support</div>
<div class="t" style="left:353.81px;top:333px;font-size:12.5px;letter-spacing:-0.915px;color:#111;font-family:'DejaVu Sans',sans-serif;">60000</div>
<div class="t" style="left:432.85px;top:333px;font-size:12.5px;letter-spacing:-0.915px;color:#111;font-family:'DejaVu Sans',sans-serif;">3000</div>
<div class="t" style="left:478.98px;top:333px;font-size:12.5px;letter-spacing:-0.265px;color:#111;font-family:'DejaVu Sans',sans-serif;">2/4/2026</div>
<div class="t" style="left:542.20px;top:333px;font-size:12.5px;letter-spacing:-3.496px;color:#111;font-family:'DejaVu Sans',sans-serif;">#########</div>
<div class="t" style="left:628.55px;top:333px;font-size:12.5px;letter-spacing:-0.867px;color:#111;font-family:'DejaVu Sans',sans-serif;">TRUE</div>
<div class="t" style="left:717.07px;top:333px;font-size:12.5px;letter-spacing:-0.771px;color:#111;font-family:'DejaVu Sans',sans-serif;">1.006</div>
<div class="t" style="left:93.05px;top:353px;font-size:12.5px;color:#111;font-family:'DejaVu Sans',sans-serif;">4</div>
<div class="t" style="left:106.20px;top:353px;font-size:12.5px;letter-spacing:0.141px;color:#111;font-family:'DejaVu Sans',sans-serif;">Ayesha</div>
<div class="t" style="left:178.20px;top:353px;font-size:12.5px;letter-spacing:0.000px;color:#111;font-family:'DejaVu Sans',sans-serif;">Malik</div>
<div class="t" style="left:250.20px;top:353px;font-size:12.5px;letter-spacing:0.000px;color:#111;font-family:'DejaVu Sans',sans-serif;">QA</div>
<div class="t" style="left:353.81px;top:353px;font-size:12.5px;letter-spacing:-0.915px;color:#111;font-family:'DejaVu Sans',sans-serif;">85000</div>
<div class="t" style="left:478.98px;top:353px;font-size:12.5px;letter-spacing:-0.265px;color:#111;font-family:'DejaVu Sans',sans-serif;">2/5/2026</div>
<div class="t" style="left:542.20px;top:353px;font-size:12.5px;letter-spacing:-3.496px;color:#111;font-family:'DejaVu Sans',sans-serif;">#########</div>
<div class="t" style="left:625.70px;top:353px;font-size:12.5px;letter-spacing:-0.358px;color:#111;font-family:'DejaVu Sans',sans-serif;">FALSE</div>
<div class="t" style="left:724.11px;top:353px;font-size:12.5px;letter-spacing:-0.736px;color:#111;font-family:'DejaVu Sans',sans-serif;">1.25</div>
<div class="t" style="left:93.05px;top:373px;font-size:12.5px;color:#111;font-family:'DejaVu Sans',sans-serif;">5</div>
<div class="t" style="left:106.20px;top:373px;font-size:12.5px;letter-spacing:0.000px;color:#111;font-family:'DejaVu Sans',sans-serif;">David</div>
<div class="t" style="left:250.20px;top:373px;font-size:12.5px;letter-spacing:0.000px;color:#111;font-family:'DejaVu Sans',sans-serif;">Development</div>
<div class="t" style="left:432.85px;top:373px;font-size:12.5px;letter-spacing:-0.915px;color:#111;font-family:'DejaVu Sans',sans-serif;">8000</div>
<div class="t" style="left:478.98px;top:373px;font-size:12.5px;letter-spacing:-0.265px;color:#111;font-family:'DejaVu Sans',sans-serif;">2/6/2026</div>
<div class="t" style="left:625.70px;top:373px;font-size:12.5px;letter-spacing:-0.358px;color:#111;font-family:'DejaVu Sans',sans-serif;">FALSE</div>
<div class="t" style="left:710.03px;top:373px;font-size:12.5px;letter-spacing:-0.795px;color:#111;font-family:'DejaVu Sans',sans-serif;">3.0048</div>
<div class="t" style="left:93.05px;top:393px;font-size:12.5px;color:#111;font-family:'DejaVu Sans',sans-serif;">6</div>
<div class="t" style="left:106.20px;top:393px;font-size:12.5px;letter-spacing:0.191px;color:#111;font-family:'DejaVu Sans',sans-serif;">Fatima</div>
<div class="t" style="left:178.20px;top:393px;font-size:12.5px;letter-spacing:0.000px;color:#111;font-family:'DejaVu Sans',sans-serif;">Noor</div>
<div class="t" style="left:250.20px;top:393px;font-size:12.5px;letter-spacing:0.000px;color:#111;font-family:'DejaVu Sans',sans-serif;">HR</div>
<div class="t" style="left:353.81px;top:393px;font-size:12.5px;letter-spacing:-0.915px;color:#111;font-family:'DejaVu Sans',sans-serif;">70000</div>
<div class="t" style="left:432.85px;top:393px;font-size:12.5px;letter-spacing:-0.915px;color:#111;font-family:'DejaVu Sans',sans-serif;">4000</div>
<div class="t" style="left:478.98px;top:393px;font-size:12.5px;letter-spacing:-0.265px;color:#111;font-family:'DejaVu Sans',sans-serif;">2/7/2026</div>
<div class="t" style="left:542.20px;top:393px;font-size:12.5px;letter-spacing:-3.496px;color:#111;font-family:'DejaVu Sans',sans-serif;">#########</div>
<div class="t" style="left:625.70px;top:393px;font-size:12.5px;letter-spacing:-0.358px;color:#111;font-family:'DejaVu Sans',sans-serif;">FALSE</div>
<div class="t" style="left:731.15px;top:393px;font-size:12.5px;letter-spacing:-0.676px;color:#111;font-family:'DejaVu Sans',sans-serif;">0.5</div>
<div class="t" style="left:93.05px;top:413px;font-size:12.5px;color:#111;font-family:'DejaVu Sans',sans-serif;">7</div>
<div class="t" style="left:106.20px;top:413px;font-size:12.5px;letter-spacing:0.000px;color:#111;font-family:'DejaVu Sans',sans-serif;">Michael</div>
<div class="t" style="left:178.20px;top:413px;font-size:12.5px;letter-spacing:0.055px;color:#111;font-family:'DejaVu Sans',sans-serif;">Brown</div>
<div class="t" style="left:250.20px;top:413px;font-size:12.5px;letter-spacing:0.000px;color:#111;font-family:'DejaVu Sans',sans-serif;">Support</div>
<div class="t" style="left:353.81px;top:413px;font-size:12.5px;letter-spacing:-0.915px;color:#111;font-family:'DejaVu Sans',sans-serif;">65000</div>
<div class="t" style="left:432.85px;top:413px;font-size:12.5px;letter-spacing:-0.915px;color:#111;font-family:'DejaVu Sans',sans-serif;">3500</div>
<div class="t" style="left:478.98px;top:413px;font-size:12.5px;letter-spacing:-0.265px;color:#111;font-family:'DejaVu Sans',sans-serif;">2/8/2026</div>
<div class="t" style="left:542.20px;top:413px;font-size:12.5px;letter-spacing:-3.496px;color:#111;font-family:'DejaVu Sans',sans-serif;">#########</div>
<div class="t" style="left:628.55px;top:413px;font-size:12.5px;letter-spacing:-0.867px;color:#111;font-family:'DejaVu Sans',sans-serif;">TRUE</div>
<div class="t" style="left:710.03px;top:413px;font-size:12.5px;letter-spacing:-0.795px;color:#111;font-family:'DejaVu Sans',sans-serif;">0.0001</div>
<div class="t" style="left:93.05px;top:433px;font-size:12.5px;color:#111;font-family:'DejaVu Sans',sans-serif;">8</div>
<div class="t" style="left:178.20px;top:433px;font-size:12.5px;letter-spacing:0.073px;color:#111;font-family:'DejaVu Sans',sans-serif;">Lee</div>
<div class="t" style="left:250.20px;top:433px;font-size:12.5px;letter-spacing:0.000px;color:#111;font-family:'DejaVu Sans',sans-serif;">QA</div>
<div class="t" style="left:353.81px;top:433px;font-size:12.5px;letter-spacing:-0.915px;color:#111;font-family:'DejaVu Sans',sans-serif;">90000</div>
<div class="t" style="left:432.85px;top:433px;font-size:12.5px;letter-spacing:-0.915px;color:#111;font-family:'DejaVu Sans',sans-serif;">6000</div>
<div class="t" style="left:478.98px;top:433px;font-size:12.5px;letter-spacing:-0.265px;color:#111;font-family:'DejaVu Sans',sans-serif;">2/9/2026</div>
<div class="t" style="left:542.20px;top:433px;font-size:12.5px;letter-spacing:-3.496px;color:#111;font-family:'DejaVu Sans',sans-serif;">#########</div>
<div class="t" style="left:628.55px;top:433px;font-size:12.5px;letter-spacing:-0.867px;color:#111;font-family:'DejaVu Sans',sans-serif;">TRUE</div>
<div class="t" style="left:710.03px;top:433px;font-size:12.5px;letter-spacing:-0.795px;color:#111;font-family:'DejaVu Sans',sans-serif;">123.56</div>
<div class="t" style="left:93.05px;top:453px;font-size:12.5px;color:#111;font-family:'DejaVu Sans',sans-serif;">9</div>
<div class="t" style="left:106.20px;top:453px;font-size:12.5px;letter-spacing:0.000px;color:#111;font-family:'DejaVu Sans',sans-serif;">Omar</div>
<div class="t" style="left:178.20px;top:453px;font-size:12.5px;letter-spacing:0.237px;color:#111;font-family:'DejaVu Sans',sans-serif;">Farooq</div>
<div class="t" style="left:250.20px;top:453px;font-size:12.5px;letter-spacing:-1.304px;color:#111;font-family:'DejaVu Sans',sans-serif;">#$@#%$@</div>
<div class="t" style="left:346.77px;top:453px;font-size:12.5px;letter-spacing:-0.915px;color:#111;font-family:'DejaVu Sans',sans-serif;">110000</div>
<div class="t" style="left:425.81px;top:453px;font-size:12.5px;letter-spacing:-0.915px;color:#111;font-family:'DejaVu Sans',sans-serif;">12000</div>
<div class="t" style="left:471.94px;top:453px;font-size:12.5px;letter-spacing:-0.337px;color:#111;font-family:'DejaVu Sans',sans-serif;">2/10/2026</div>
<div class="t" style="left:542.20px;top:453px;font-size:12.5px;letter-spacing:-3.496px;color:#111;font-family:'DejaVu Sans',sans-serif;">#########</div>
<div class="t" style="left:628.55px;top:453px;font-size:12.5px;letter-spacing:-0.867px;color:#111;font-family:'DejaVu Sans',sans-serif;">TRUE</div>
<div class="t" style="left:710.03px;top:453px;font-size:12.5px;letter-spacing:-0.795px;color:#111;font-family:'DejaVu Sans',sans-serif;">124.56</div>
<div class="t" style="left:86.92px;top:473px;font-size:12.5px;letter-spacing:-0.915px;color:#111;font-family:'DejaVu Sans',sans-serif;">10</div>
<div class="t" style="left:106.20px;top:473px;font-size:12.5px;letter-spacing:0.000px;color:#111;font-family:'DejaVu Sans',sans-serif;">Emma</div>
<div class="t" style="left:178.20px;top:473px;font-size:12.5px;letter-spacing:0.046px;color:#111;font-family:'DejaVu Sans',sans-serif;">Wilson</div>
<div class="abs" style="left:248px;top:470px;width:71px;height:19px;overflow:hidden"><div class="t" style="left:2.20px;top:3px;font-size:12.5px;color:#111;font-family:'DejaVu Sans',sans-serif;letter-spacing:-0.29px;">Development</div></div>
<div class="t" style="left:346.77px;top:473px;font-size:12.5px;letter-spacing:-0.915px;color:#111;font-family:'DejaVu Sans',sans-serif;">130000</div>
<div class="t" style="left:425.81px;top:473px;font-size:12.5px;letter-spacing:-0.915px;color:#111;font-family:'DejaVu Sans',sans-serif;">20000</div>
<div class="t" style="left:471.94px;top:473px;font-size:12.5px;letter-spacing:-0.337px;color:#111;font-family:'DejaVu Sans',sans-serif;">2/11/2026</div>
<div class="t" style="left:542.20px;top:473px;font-size:12.5px;letter-spacing:-3.496px;color:#111;font-family:'DejaVu Sans',sans-serif;">#########</div>
<div class="t" style="left:625.70px;top:473px;font-size:12.5px;letter-spacing:-0.358px;color:#111;font-family:'DejaVu Sans',sans-serif;">FALSE</div>
<div class="t" style="left:710.03px;top:473px;font-size:12.5px;letter-spacing:-0.795px;color:#111;font-family:'DejaVu Sans',sans-serif;">125.56</div>
<div class="t" style="left:86.92px;top:493px;font-size:12.5px;letter-spacing:-0.915px;color:#111;font-family:'DejaVu Sans',sans-serif;">10</div>
<div class="t" style="left:106.20px;top:493px;font-size:12.5px;letter-spacing:0.000px;color:#111;font-family:'DejaVu Sans',sans-serif;">Emma</div>
<div class="t" style="left:178.20px;top:493px;font-size:12.5px;letter-spacing:0.046px;color:#111;font-family:'DejaVu Sans',sans-serif;">Wilson</div>
<div class="abs" style="left:248px;top:490px;width:71px;height:19px;overflow:hidden"><div class="t" style="left:2.20px;top:3px;font-size:12.5px;color:#111;font-family:'DejaVu Sans',sans-serif;letter-spacing:-0.29px;">Development</div></div>
<div class="t" style="left:346.77px;top:493px;font-size:12.5px;letter-spacing:-0.915px;color:#111;font-family:'DejaVu Sans',sans-serif;">130000</div>
<div class="t" style="left:425.81px;top:493px;font-size:12.5px;letter-spacing:-0.915px;color:#111;font-family:'DejaVu Sans',sans-serif;">20000</div>
<div class="t" style="left:471.94px;top:493px;font-size:12.5px;letter-spacing:-0.337px;color:#111;font-family:'DejaVu Sans',sans-serif;">2/11/2026</div>
<div class="t" style="left:542.20px;top:493px;font-size:12.5px;letter-spacing:-3.496px;color:#111;font-family:'DejaVu Sans',sans-serif;">#########</div>
<div class="t" style="left:625.70px;top:493px;font-size:12.5px;letter-spacing:-0.358px;color:#111;font-family:'DejaVu Sans',sans-serif;">FALSE</div>
<div class="t" style="left:710.03px;top:493px;font-size:12.5px;letter-spacing:-0.795px;color:#111;font-family:'DejaVu Sans',sans-serif;">126.56</div>
<div class="t" style="left:11.32px;top:273px;font-size:12.5px;color:#4a4a4a;font-family:'DejaVu Sans',sans-serif;">1</div>
<div class="t" style="left:11.32px;top:293px;font-size:12.5px;color:#4a4a4a;font-family:'DejaVu Sans',sans-serif;">2</div>
<div class="t" style="left:11.32px;top:313px;font-size:12.5px;color:#4a4a4a;font-family:'DejaVu Sans',sans-serif;">3</div>
<div class="t" style="left:11.32px;top:333px;font-size:12.5px;color:#4a4a4a;font-family:'DejaVu Sans',sans-serif;">4</div>
<div class="t" style="left:11.32px;top:353px;font-size:12.5px;color:#4a4a4a;font-family:'DejaVu Sans',sans-serif;">5</div>
<div class="t" style="left:11.32px;top:373px;font-size:12.5px;color:#4a4a4a;font-family:'DejaVu Sans',sans-serif;">6</div>
<div class="t" style="left:11.32px;top:393px;font-size:12.5px;color:#4a4a4a;font-family:'DejaVu Sans',sans-serif;">7</div>
<div class="t" style="left:11.32px;top:413px;font-size:12.5px;color:#4a4a4a;font-family:'DejaVu Sans',sans-serif;">8</div>
<div class="t" style="left:11.32px;top:433px;font-size:12.5px;color:#1a7f4d;font-family:'DejaVu Sans',sans-serif;">9</div>
<div class="t" style="left:8.26px;top:453px;font-size:12.5px;letter-spacing:-0.915px;color:#4a4a4a;font-family:'DejaVu Sans',sans-serif;">10</div>
<div class="t" style="left:8.26px;top:473px;font-size:12.5px;letter-spacing:-0.915px;color:#4a4a4a;font-family:'DejaVu Sans',sans-serif;">11</div>
<div class="t" style="left:8.26px;top:493px;font-size:12.5px;letter-spacing:-0.915px;color:#4a4a4a;font-family:'DejaVu Sans',sans-serif;">12</div>
<div class="t" style="left:8.26px;top:513px;font-size:12.5px;letter-spacing:-0.915px;color:#4a4a4a;font-family:'DejaVu Sans',sans-serif;">13</div>
<div class="t" style="left:8.26px;top:533px;font-size:12.5px;letter-spacing:-0.915px;color:#4a4a4a;font-family:'DejaVu Sans',sans-serif;">14</div>
<div class="abs" style="left:102px;top:427px;width:74px;height:21px;background:transparent;border:2px solid #1a8f57"></div>
<div class="abs" style="left:173px;top:445px;width:5px;height:5px;background:#1a8f57;border:1px solid #fff;box-sizing:content-box;margin:-1px"></div>
<div class="abs" style="left:757px;top:244px;width:12px;height:307px;background:#f0f0f0;"></div>
<div class="abs" style="left:758.2px;top:299px;width:6.3px;height:160px;background:#cfcfcf;border-radius:3px"></div>
<div class="abs" style="left:758px;top:274px;width:7px;height:1px;background:#b0b0b0;"></div>
<svg style="left:758.5px;top:284px" width="7" height="5" viewBox="0 0 7 5"><path d="M3.500 .5L6.500 4.500H.5z" fill="#8a8a8a"/></svg>
<svg style="left:758.5px;top:537px" width="7" height="5" viewBox="0 0 7 5"><path d="M3.500 4.500L6.500 .5H.5z" fill="#666"/></svg>
<div class="abs" style="left:0px;top:551px;width:769px;height:26px;background:#f0f0f0;"></div>
<div class="abs" style="left:0px;top:551px;width:769px;height:1px;background:#d4d4d4;"></div>
<div class="abs" style="left:102.5px;top:551px;width:166px;height:24.5px;background:#fff;border-radius:0 0 7px 7px"></div>
<div class="t" style="left:114.60px;top:558px;font-size:12px;letter-spacing:-1.372px;color:#14804a;font-weight:bold;font-family:'DejaVu Sans',sans-serif;">Prism_AutoField_TestData</div>
<svg style="left:14px;top:559px" width="10" height="10" viewBox="0 0 10 10"><path d="M1 0v10M9 .5L4 5l5 4.500" fill="none" stroke="#9a9a9a" stroke-width="1.200"/></svg>
<svg style="left:37.5px;top:559px" width="6" height="10" viewBox="0 0 6 10"><path d="M5 .5L.8 5 5 9.500" fill="none" stroke="#9a9a9a" stroke-width="1.200"/></svg>
<svg style="left:60px;top:559px" width="6" height="10" viewBox="0 0 6 10"><path d="M1 .5L5.200 5 1 9.500" fill="none" stroke="#9a9a9a" stroke-width="1.200"/></svg>
<svg style="left:80px;top:559px" width="10" height="10" viewBox="0 0 10 10"><path d="M9 0v10M1 .5L6 5 1 9.500" fill="none" stroke="#9a9a9a" stroke-width="1.200"/></svg>
<svg style="left:275px;top:559.5px" width="10" height="10" viewBox="0 0 10 10"><path d="M5 0v10M0 5h10" stroke="#222" stroke-width="1.600"/></svg>
<div class="abs" style="left:445.5px;top:560px;width:1px;height:8px;background:#8a8a8a;"></div>
<div class="abs" style="left:748.5px;top:560px;width:1px;height:8px;background:#8a8a8a;"></div>
<svg style="left:459.5px;top:561.5px" width="4" height="5" viewBox="0 0 4 5"><path d="M4 0v5L0 2.500z" fill="#555"/></svg>
<svg style="left:731px;top:561.5px" width="4" height="5" viewBox="0 0 4 5"><path d="M0 0v5L4 2.500z" fill="#555"/></svg>
<div class="abs" style="left:474px;top:560px;width:204.5px;height:8px;background:#cdcdcd;border-radius:4px"></div>
<div class="abs" style="left:0px;top:577px;width:769px;height:24px;background:#f0f0f0;"></div>
<div class="abs" style="left:0px;top:577px;width:769px;height:1px;background:#dedede;"></div>
<svg style="left:17.5px;top:582px" width="12" height="13" viewBox="0 0 12 13"><path d="M2.500 2.500h8.900v9.900H.6V4" fill="none" stroke="#3a3a3a" stroke-width="1.100"/><path d="M.6 .8v3.200M5.500 5.500v3h2.500" fill="none" stroke="#3a3a3a" stroke-width="1"/></svg>
<svg style="left:49px;top:581.5px" width="14" height="14" viewBox="0 0 14 14"><path d="M.5 .5l1 3 1-3M4 .5v3h1.200a.8.800 0 0 0 0-1.500H4M4 .5h1.100a.7.700 0 0 1 0 1.500M7.500 3.500v-3h1.300a.9.900 0 0 1 0 1.800H7.500" fill="none" stroke="#3a3a3a" stroke-width=".8"/><path d="M2 6h6v3M2 6v7h6v-2.500M6 9h6.500v-3.500h-2" fill="none" stroke="#3a3a3a" stroke-width="1.100"/></svg>
<svg style="left:82px;top:582.5px" width="13" height="12" viewBox="0 0 13 12"><path d="M5.500 .6H.6v10.800h11.800V5.500" fill="none" stroke="#3a3a3a" stroke-width="1.100"/><path d="M7.500 1h5M7.500 3.500h5M5 6.500h4.500M5 9h4.500" stroke="#3a3a3a" stroke-width="1"/></svg>
<svg style="left:221px;top:582px" width="15" height="14" viewBox="0 0 15 14"><path d="M14.400 6.500V.6H.6v10.800H7.500M.6 4h13.800M.6 7.500h7M5.500 .6v10.800" fill="none" stroke="#3a3a3a" stroke-width="1.100"/><circle cx="11" cy="10.500" r="3" fill="none" stroke="#3a3a3a" stroke-width="1"/><circle cx="11" cy="10.500" r="1" fill="#3a3a3a"/></svg>
<svg style="left:256px;top:582px" width="15" height="14" viewBox="0 0 15 14"><rect x="5" y="4.500" width="5" height="5" fill="none" stroke="#3a3a3a" stroke-width="1.100"/><path d="M5.500 2.500V.6h4v1.900M5.500 11.500v1.900h4v-1.900M3 5H.6v4H3M12 5h2.400v4H12" fill="none" stroke="#3a3a3a" stroke-width="1.100"/></svg>
<svg style="left:276px;top:587px" width="6" height="4" viewBox="0 0 6 4"><path d="M.5 .5L3 3 5.500 .5" fill="none" stroke="#333" stroke-width="1.200"/></svg>
<div class="abs" style="left:297.5px;top:582px;width:1px;height:13px;background:#cfcfcf;"></div>
<svg style="left:312px;top:582px" width="14" height="14" viewBox="0 0 14 14"><path d="M4 2.500V.6h9.400v12.800H4v-2" fill="none" stroke="#3a3a3a" stroke-width="1.100"/><path d="M0 7h8M5.500 4.500L8 7 5.500 9.500M8.500 11.500h2.500" fill="none" stroke="#3a3a3a" stroke-width="1.100"/></svg>
<div class="abs" style="left:338px;top:577.5px;width:24px;height:22.5px;background:#d9d9d9;border-radius:4px"></div>
<svg style="left:344px;top:582.5px" width="14" height="12" viewBox="0 0 14 12"><rect x=".6" y=".6" width="12.800" height="10.800" fill="none" stroke="#2b2b2b" stroke-width="1.100"/><path d="M.6 4h12.800M4.500 .6v10.800" stroke="#2b2b2b" stroke-width="1.100"/></svg>
<svg style="left:376px;top:582.5px" width="13" height="12" viewBox="0 0 13 12"><rect x=".6" y=".6" width="11.800" height="10.800" fill="none" stroke="#2b2b2b" stroke-width="1.100"/><path d="M6.500 .6v10.800" stroke="#2b2b2b" stroke-width="1.100"/></svg>
<svg style="left:408px;top:582px" width="14" height="13" viewBox="0 0 14 13"><rect x=".6" y=".6" width="11" height="9" fill="none" stroke="#2b2b2b" stroke-width="1.100"/><path d="M13.400 3.500v9H3" fill="none" stroke="#2b2b2b" stroke-width="1.100"/></svg>
<svg style="left:440.5px;top:583px" width="16" height="11" viewBox="0 0 16 11"><path d="M.6 5.500C3 1.500 5.700 .6 8 .6s5 .9 7.400 4.900C13 9.500 10.300 10.400 8 10.400S3 9.500 .6 5.500z" fill="none" stroke="#2b2b2b" stroke-width="1.100"/><circle cx="8" cy="5.500" r="2.300" fill="none" stroke="#2b2b2b" stroke-width="1.100"/></svg>
<svg style="left:461px;top:587px" width="6" height="4" viewBox="0 0 6 4"><path d="M.5 .5L3 3 5.500 .5" fill="none" stroke="#333" stroke-width="1.200"/></svg>
<div class="abs" style="left:482px;top:582px;width:1px;height:13px;background:#cfcfcf;"></div>
<div class="t" style="left:499.00px;top:583px;font-size:11px;letter-spacing:-1.112px;color:#333;font-family:'DejaVu Sans',sans-serif;">100%</div>
<svg style="left:537px;top:587px" width="6" height="4" viewBox="0 0 6 4"><path d="M.5 .5L3 3 5.500 .5" fill="none" stroke="#333" stroke-width="1.200"/></svg>
<div class="abs" style="left:560.5px;top:588px;width:12.5px;height:1.6px;background:#222;"></div>
<div class="abs" style="left:587px;top:588.3px;width:106px;height:1px;background:#c4c4c4;"></div>
<div class="abs" style="left:587px;top:588px;width:53px;height:1.6px;background:#2b63d9;"></div>
<div class="abs" style="left:635.5px;top:583.5px;width:10px;height:10px;background:#fff;border-radius:5px;box-shadow:0 0 2px rgba(0,0,0,.45)"></div>
<div class="abs" style="left:638.5px;top:586.5px;width:4px;height:4px;background:#9a9a9a;border-radius:2px"></div>
<svg style="left:707.5px;top:583.5px" width="10.5" height="10.5" viewBox="0 0 10.5 10.5"><path d="M5.250 0v10.500M0 5.250h10.500" stroke="#222" stroke-width="1.600"/></svg>
<svg style="left:738.5px;top:582px" width="14" height="13" viewBox="0 0 14 13"><path d="M9 .6h4.400V5M13.400 .6L8.500 5.500M5 12.400H.6V8M.6 12.400L5.500 7.500M.6 4.500V.6H4.500M13.400 8.500v3.900H9.500" fill="none" stroke="#2b2b2b" stroke-width="1.100"/></svg>
</div></div>
</body></html>
